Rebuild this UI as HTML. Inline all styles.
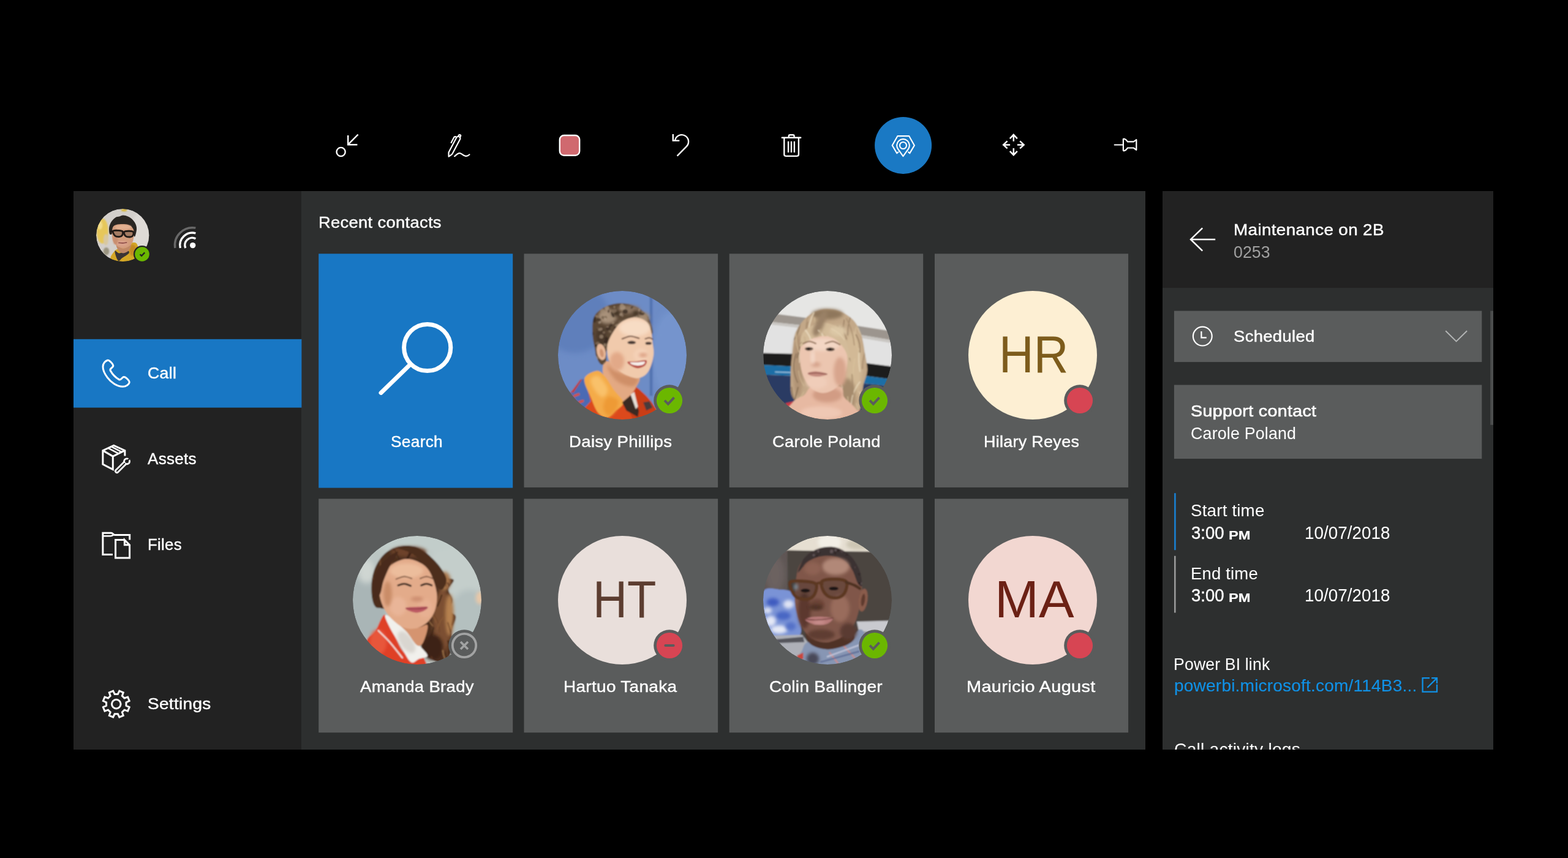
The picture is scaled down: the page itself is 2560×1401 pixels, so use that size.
<!DOCTYPE html>
<html lang="en">
<head>
<meta charset="utf-8">
<title>Remote Assist - Recent contacts</title>
<style>
*{box-sizing:border-box;margin:0;padding:0}
html,body{width:2560px;height:1401px;background:#000;overflow:hidden}
body{position:relative;font-family:"Liberation Sans",sans-serif;color:#fff}
.abs{position:absolute}
svg{position:absolute;display:block}
.x{position:absolute;white-space:nowrap;line-height:1;transform-origin:0 50%}
#side{left:120px;top:312px;width:372px;height:912px;background:#222}
#main{left:492px;top:312px;width:1378px;height:912px;background:#2d2f2f}
#right{left:1898px;top:312px;width:540px;height:912px;background:#2d2f2f}
#rhead{left:1898px;top:312px;width:540px;height:158px;background:#222}
#clip{left:1898px;top:1190px;width:540px;height:34px;overflow:hidden}
#logs{margin-left:-1898px;margin-top:-1190px}
.av{position:absolute;width:210px;height:210px;border-radius:50%;overflow:hidden}
.av.me{width:86.4px;height:86.4px}
.av svg{left:0;top:0}
.bdg{overflow:visible}

</style>
</head>
<body>
<div id="side" class="abs"></div>
<div id="main" class="abs"></div>
<div id="right" class="abs"></div>
<div id="rhead" class="abs"></div>
<svg id="bg" width="2560" height="1401" viewBox="0 0 2560 1401" style="left:0;top:0"><rect x="120" y="553.8" width="372.4" height="111.8" fill="#1877c4"/><rect x="520.2" y="414.3" width="317.00" height="382.30" fill="#1877c4"/><rect x="855.5" y="414.3" width="316.60" height="381.60" fill="#5a5c5c"/><rect x="1190.7" y="414.3" width="316.50" height="381.60" fill="#5a5c5c"/><rect x="1526.0" y="414.3" width="316.10" height="381.60" fill="#5a5c5c"/><rect x="520.2" y="814.4" width="317.00" height="381.80" fill="#5a5c5c"/><rect x="855.5" y="814.4" width="316.60" height="381.80" fill="#5a5c5c"/><rect x="1190.7" y="814.4" width="316.50" height="381.80" fill="#5a5c5c"/><rect x="1526.0" y="814.4" width="316.10" height="381.80" fill="#5a5c5c"/><rect x="1916.9" y="507.6" width="502.4" height="83.5" fill="#5a5c5c"/><rect x="1916.9" y="628.5" width="502.4" height="120.6" fill="#5a5c5c"/><rect x="1917" y="805.2" width="2.8" height="93" fill="#1a7bc8"/><rect x="1917" y="907.7" width="2.6" height="92.8" fill="#9a9a9a"/><rect x="2433.2" y="507.6" width="4.8" height="186.2" fill="#4c4e4e"/></svg>

<div class="av me" style="left:157.3px;top:341.1px"><svg class="ph" width="86.4" height="86.4" viewBox="0 0 210 210"><defs><clipPath id="cu"><circle cx="105" cy="105" r="105"/></clipPath><filter id="bu" x="-10%" y="-10%" width="120%" height="120%"><feGaussianBlur stdDeviation="1.6"/></filter><filter id="su" x="-30%" y="-30%" width="160%" height="160%"><feGaussianBlur stdDeviation="5"/></filter><filter id="mu" x="-30%" y="-30%" width="160%" height="160%"><feGaussianBlur stdDeviation="2.4"/></filter></defs><g clip-path="url(#cu)"><g filter="url(#bu)"><rect x="-5" y="-5" width="220" height="220" fill="#d3cfcb"/><ellipse cx="177.9" cy="88.0" rx="38.3" ry="76.5" fill="#dedad6" filter="url(#su)"/><ellipse cx="24.9" cy="88.0" rx="23.0" ry="49.7" fill="#e6c75a" filter="url(#mu)"/><ellipse cx="15.3" cy="65.0" rx="9.6" ry="17.2" fill="#f2dc8a" filter="url(#mu)"/><ellipse cx="38.3" cy="122.4" rx="9.6" ry="23.0" fill="#d8c8a0" filter="url(#mu)"/><ellipse cx="110.9" cy="4.8" rx="11.5" ry="5.7" fill="#d8b840" filter="url(#mu)"/><ellipse cx="40.2" cy="168.3" rx="11.5" ry="15.3" fill="#9a9480" filter="url(#mu)"/><path d="M57.4 198.9C54.2 190.0 66.9 175.3 72.7 168.3C78.4 161.3 79.7 162.6 91.8 156.8C103.9 151.1 133.2 135.8 145.4 133.9C157.5 132.0 161.9 137.1 164.5 145.4C167.0 153.6 164.5 172.1 160.7 183.6C156.8 195.1 153.0 207.8 141.5 214.2C130.1 220.6 105.8 224.4 91.8 221.9C77.8 219.3 60.6 207.8 57.4 198.9Z" fill="#d4a726" /><ellipse cx="145.4" cy="164.5" rx="13.4" ry="23.0" fill="#c48a20" filter="url(#mu)"/><path d="M74.6 166.4C76.5 163.5 83.8 176.3 91.8 176.0C99.8 175.6 116.0 164.5 122.4 164.5C128.8 164.5 133.2 170.9 130.1 176.0C126.9 181.1 110.0 190.0 103.3 195.1C96.6 200.2 93.7 206.9 89.9 206.6C86.1 206.2 82.9 199.9 80.3 193.2C77.8 186.5 72.7 169.3 74.6 166.4Z" fill="#3b3434" /><path d="M80.3 141.5C83.5 140.3 97.5 156.8 107.1 156.8C116.7 156.8 133.9 140.3 137.7 141.5C141.5 142.8 135.2 158.7 130.1 164.5C125.0 170.2 114.1 176.0 107.1 176.0C100.1 176.0 92.4 170.2 88.0 164.5C83.5 158.7 77.1 142.8 80.3 141.5Z" fill="#c08866" /><path d="M53.6 99.5C51.6 95.0 50.4 81.0 51.6 72.7C52.9 64.4 57.1 56.1 61.2 49.7C65.3 43.4 71.4 37.6 76.5 34.4C81.6 31.2 86.7 32.0 91.8 30.6C96.9 29.2 101.4 25.8 107.1 25.8C112.8 25.8 120.5 28.2 126.2 30.6C132.0 33.0 136.7 35.7 141.5 40.2C146.3 44.6 151.7 50.7 154.9 57.4C158.1 64.1 161.0 71.4 160.7 80.3C160.3 89.3 155.6 109.7 153.0 110.9C150.5 112.2 147.9 95.0 145.4 88.0C142.8 81.0 143.4 73.0 137.7 68.9C132.0 64.7 120.5 63.4 110.9 63.1C101.4 62.8 87.7 64.1 80.3 66.9C73.0 69.8 69.8 74.9 66.9 80.3C64.1 85.7 65.3 96.3 63.1 99.5C60.9 102.6 55.5 103.9 53.6 99.5Z" fill="#2b2522" /><path d="M63.1 91.8C63.8 82.9 64.1 74.0 68.9 68.9C73.6 63.8 82.2 62.2 91.8 61.2C101.4 60.2 117.0 59.9 126.2 63.1C135.5 66.3 143.4 72.4 147.3 80.3C151.1 88.3 150.1 101.4 149.2 110.9C148.2 120.5 146.0 130.7 141.5 137.7C137.1 144.7 128.8 149.8 122.4 153.0C116.0 156.2 110.3 158.1 103.3 156.8C96.3 155.6 86.7 151.1 80.3 145.4C74.0 139.6 67.9 131.3 65.0 122.4C62.2 113.5 62.5 100.7 63.1 91.8Z" fill="#d39c7c" /><ellipse cx="107.1" cy="72.7" rx="32.5" ry="9.6" fill="#e2b090" filter="url(#mu)"/><ellipse cx="103.3" cy="137.7" rx="23.0" ry="11.5" fill="#d9a08a" filter="url(#mu)"/><ellipse cx="76.5" cy="122.4" rx="9.6" ry="19.1" fill="#c98e70" filter="url(#mu)"/><path d="M66.9 88.0C69.2 84.5 81.6 85.7 88.0 86.1C94.4 86.4 102.6 86.7 105.2 89.9C107.7 93.1 105.5 101.7 103.3 105.2C101.0 108.7 96.6 110.6 91.8 110.9C87.0 111.2 78.7 110.9 74.6 107.1C70.4 103.3 64.7 91.5 66.9 88.0Z" fill="#6a5448" fill-opacity=".45" stroke="#231a18" stroke-width="7"/><path d="M110.9 91.8C113.2 88.5 124.0 88.0 130.1 88.0C136.1 88.0 144.7 88.6 147.3 91.8C149.8 95.0 147.6 103.8 145.4 107.1C143.1 110.5 138.7 111.7 133.9 111.9C129.1 112.0 120.5 111.4 116.7 108.1C112.8 104.7 108.7 95.2 110.9 91.8Z" fill="#6a5448" fill-opacity=".45" stroke="#231a18" stroke-width="7"/><path d="M105.2 92.8C106.1 92.9 110.0 93.6 110.9 93.7" fill="none" stroke="#231a18" stroke-width="6" stroke-linecap="round"/><path d="M65.0 88.0C63.4 88.6 57.1 91.2 55.5 91.8" fill="none" stroke="#231a18" stroke-width="5" stroke-linecap="round"/><path d="M89.9 134.8C92.4 135.0 100.1 136.0 105.2 135.8C110.3 135.6 117.9 134.2 120.5 133.9" fill="none" stroke="#8a4a44" stroke-width="4" stroke-linecap="round"/></g></g></svg></div>
<svg class="bdg" width="32" height="32" viewBox="-16 -16 32 32" style="left:215.5px;top:399.4px"><circle r="14" fill="#222"/><circle r="11.8" fill="#6bb700"/><path d="M-3.4 0.3L-0.9 2.9L4.3 -2.6" fill="none" stroke="#222" stroke-width="2.3"/></svg>

<div class="x" style="left:240.86px;top:596.29px;font-size:26.4px;color:#fff;-webkit-text-stroke:0.4px #fff;letter-spacing:0.300px;transform:scaleX(1.0106);">Call</div>
<div class="x" style="left:241.39px;top:736.29px;font-size:26.4px;color:#fff;-webkit-text-stroke:0.4px #fff;letter-spacing:0.300px;transform:scaleX(0.9868);">Assets</div>
<div class="x" style="left:240.93px;top:876.09px;font-size:26.4px;color:#fff;-webkit-text-stroke:0.4px #fff;letter-spacing:0.300px;transform:scaleX(0.9762);">Files</div>
<div class="x" style="left:240.74px;top:1136.29px;font-size:26.4px;color:#fff;-webkit-text-stroke:0.4px #fff;letter-spacing:0.300px;transform:scaleX(1.0604);">Settings</div>
<div class="x" style="left:519.68px;top:349.79px;font-size:26.4px;color:#fff;-webkit-text-stroke:0.4px #fff;letter-spacing:0.300px;transform:scaleX(1.0364);">Recent contacts</div>
<div class="x" style="left:638.41px;top:708.49px;font-size:26.4px;color:#fff;-webkit-text-stroke:0.4px #fff;letter-spacing:0.300px;transform:scaleX(0.9953);">Search</div>
<div class="av" style="left:911px;top:475px"><svg class="ph" width="210" height="210" viewBox="0 0 210 210"><defs><clipPath id="cd"><circle cx="105" cy="105" r="105"/></clipPath><filter id="bd" x="-10%" y="-10%" width="120%" height="120%"><feGaussianBlur stdDeviation="1.1"/></filter><filter id="sd" x="-30%" y="-30%" width="160%" height="160%"><feGaussianBlur stdDeviation="5"/></filter><filter id="md" x="-30%" y="-30%" width="160%" height="160%"><feGaussianBlur stdDeviation="2.4"/></filter></defs><g clip-path="url(#cd)"><g filter="url(#bd)"><rect x="-5" y="-5" width="220" height="220" fill="#6d8cc6"/><ellipse cx="27.8" cy="44.9" rx="56.5" ry="56.5" fill="#5f7fbb" filter="url(#sd)"/><ellipse cx="187.1" cy="104.8" rx="34.3" ry="71.9" fill="#7494cd" filter="url(#sd)"/><rect x="149.7" y="0.0" width="4.5" height="171.3" fill="#5373b0" /><rect x="154.2" y="0.0" width="1.7" height="171.3" fill="#6686c2" /><path d="M19.2 166.5L43.2 143.4L65.4 130.5L94.6 156.2L122.0 153.7L144.2 171.6L163.1 195.6L163.1 212.8L15.8 212.8Z" fill="#dc4a1d" /><path d="M122.0 156.2C126.0 153.7 133.1 160.8 139.1 166.5C145.1 172.2 155.1 182.8 157.9 190.5C160.8 198.2 161.7 209.1 156.2 212.8C150.8 216.5 132.2 217.9 125.4 212.8C118.5 207.6 115.7 191.3 115.1 181.9C114.5 172.5 118.0 158.8 122.0 156.2Z" fill="#c93c16" /><path d="M20.0 167.4L36.3 145.1L44.0 143.4L53.4 180.2L41.5 193.1Z" fill="#4c6bb4" /><path d="M25.2 169.9L34.6 166.5L35.6 169.9L26.0 173.4Z" fill="#d8503a" /><path d="M32.9 180.2L41.5 177.6L42.3 181.1L34.3 184.0Z" fill="#d8503a" /><path d="M21.8 164.8L36.3 145.1L39.4 144.2L25.2 166.5Z" fill="#c33a2a" /><path d="M77.4 115.1C82.6 112.8 95.7 121.4 104.8 125.4C114.0 129.4 128.5 133.7 132.2 139.1C136.0 144.5 130.0 152.2 127.1 157.9C124.3 163.7 119.1 169.1 115.1 173.4C111.1 177.6 107.7 185.9 103.1 183.6C98.6 181.4 92.6 167.1 87.7 159.7C82.9 152.2 75.7 146.5 74.0 139.1C72.3 131.7 72.3 117.4 77.4 115.1Z" fill="#e3a983" /><path d="M80.9 122.0C82.6 120.3 96.6 132.4 104.8 135.7C113.1 139.0 127.7 138.2 130.5 141.7C133.4 145.1 128.0 155.5 122.0 156.2C116.0 156.9 101.4 151.7 94.6 146.0C87.7 140.2 79.1 123.7 80.9 122.0Z" fill="#cf8f68" filter="url(#md)"/><path d="M43.2 143.4C44.9 136.2 58.0 131.0 63.7 130.5C69.4 130.1 72.9 135.7 77.4 140.8C82.0 146.0 86.3 154.5 91.1 161.4C96.0 168.2 106.0 176.2 106.6 181.9C107.1 187.6 98.8 191.5 94.6 195.6C90.3 199.8 85.7 206.2 80.9 206.8C76.0 207.3 70.0 204.6 65.4 199.1C60.9 193.5 57.2 182.6 53.4 173.4C49.7 164.1 41.5 150.5 43.2 143.4Z" fill="#f4ab49" /><path d="M53.4 146.0C54.0 141.7 60.9 136.8 65.4 139.1C70.0 141.4 79.4 153.9 80.9 159.7C82.3 165.4 77.1 172.5 74.0 173.4C70.9 174.2 65.4 169.4 62.0 164.8C58.6 160.2 52.9 150.2 53.4 146.0Z" fill="#f9c16a" filter="url(#md)"/><path d="M80.9 173.4C84.9 171.4 95.7 175.1 98.0 178.5C100.3 181.9 97.1 189.6 94.6 193.9C92.0 198.2 86.0 204.8 82.6 204.2C79.1 203.6 74.3 195.6 74.0 190.5C73.7 185.4 76.9 175.4 80.9 173.4Z" fill="#ee9a35" filter="url(#md)"/><path d="M104.8 181.9L120.3 169.1L132.2 195.6L130.5 205.9L111.7 195.6Z" fill="#3b2a22" /><path d="M118.5 169.1L124.5 164.8L130.5 188.8L127.1 193.1Z" fill="#e6dfd6" /><path d="M139.1 181.9L149.4 180.2L154.5 190.5L144.2 195.6Z" fill="#4a3a3a" /><path d="M60.3 94.6C59.2 88.3 56.8 79.1 56.5 70.6C56.2 62.0 55.7 50.3 58.6 43.2C61.5 36.0 67.7 31.5 74.0 27.8C80.3 24.0 88.3 21.3 96.3 20.6C104.3 19.8 114.3 20.8 122.0 23.5C129.7 26.1 137.5 31.3 142.5 36.3C147.5 41.3 150.1 47.7 151.9 53.4C153.8 59.2 155.8 67.2 153.7 70.6C151.5 74.0 147.2 72.3 139.1 74.0C131.0 75.7 114.5 77.4 104.8 80.9C95.1 84.3 85.3 88.9 80.9 94.6C76.4 100.3 80.0 110.8 78.3 115.1C76.6 119.4 73.1 121.4 70.6 120.3C68.0 119.1 64.6 112.5 62.9 108.3C61.2 104.0 61.4 100.8 60.3 94.6Z" fill="#5b4735" /><ellipse cx="80.9" cy="41.5" rx="15.4" ry="12.0" fill="#a8917a" filter="url(#md)"/><ellipse cx="115.1" cy="30.3" rx="18.8" ry="6.9" fill="#8c7560" filter="url(#md)"/><ellipse cx="139.1" cy="43.2" rx="10.3" ry="8.6" fill="#a08870" filter="url(#md)"/><ellipse cx="70.6" cy="74.0" rx="8.6" ry="15.4" fill="#4a382a" filter="url(#md)"/><ellipse cx="94.6" cy="36.3" rx="6.9" ry="5.1" fill="#3f3024" filter="url(#md)"/><ellipse cx="127.1" cy="36.3" rx="5.1" ry="4.1" fill="#3f3024" filter="url(#md)"/><clipPath id="hd"><path d="M60.3 94.6C59.2 88.3 56.8 79.1 56.5 70.6C56.2 62.0 55.7 50.3 58.6 43.2C61.5 36.0 67.7 31.5 74.0 27.8C80.3 24.0 88.3 21.3 96.3 20.6C104.3 19.8 114.3 20.8 122.0 23.5C129.7 26.1 137.5 31.3 142.5 36.3C147.5 41.3 150.1 47.7 151.9 53.4C153.8 59.2 155.8 67.2 153.7 70.6C151.5 74.0 147.2 72.3 139.1 74.0C131.0 75.7 114.5 77.4 104.8 80.9C95.1 84.3 85.3 88.9 80.9 94.6C76.4 100.3 80.0 110.8 78.3 115.1C76.6 119.4 73.1 121.4 70.6 120.3C68.0 119.1 64.6 112.5 62.9 108.3C61.2 104.0 61.4 100.8 60.3 94.6Z"/></clipPath><g clip-path="url(#hd)" opacity="0.7"><ellipse cx="88.0" cy="35.6" rx="2.2" ry="1.7" fill="#3a2c22" transform="rotate(117 88.0 35.6)"/><ellipse cx="92.1" cy="26.3" rx="2.1" ry="1.5" fill="#a08a74" transform="rotate(91 92.1 26.3)"/><ellipse cx="63.3" cy="29.6" rx="3.8" ry="2.1" fill="#6e5a47" transform="rotate(76 63.3 29.6)"/><ellipse cx="78.2" cy="83.1" rx="3.3" ry="2.3" fill="#2f241c" transform="rotate(171 78.2 83.1)"/><ellipse cx="151.4" cy="25.2" rx="2.6" ry="1.5" fill="#8a7560" transform="rotate(155 151.4 25.2)"/><ellipse cx="68.0" cy="51.3" rx="2.4" ry="1.9" fill="#b09a84" transform="rotate(147 68.0 51.3)"/><ellipse cx="118.6" cy="57.7" rx="2.1" ry="1.1" fill="#3a2c22" transform="rotate(99 118.6 57.7)"/><ellipse cx="76.5" cy="88.4" rx="2.7" ry="2.1" fill="#a08a74" transform="rotate(77 76.5 88.4)"/><ellipse cx="100.5" cy="50.4" rx="3.5" ry="2.2" fill="#6e5a47" transform="rotate(143 100.5 50.4)"/><ellipse cx="112.3" cy="72.9" rx="3.6" ry="2.3" fill="#2f241c" transform="rotate(158 112.3 72.9)"/><ellipse cx="151.7" cy="32.3" rx="3.7" ry="2.1" fill="#8a7560" transform="rotate(75 151.7 32.3)"/><ellipse cx="104.0" cy="24.5" rx="3.7" ry="2.9" fill="#b09a84" transform="rotate(120 104.0 24.5)"/><ellipse cx="141.6" cy="51.8" rx="3.3" ry="2.6" fill="#3a2c22" transform="rotate(125 141.6 51.8)"/><ellipse cx="100.8" cy="104.3" rx="3.0" ry="2.5" fill="#a08a74" transform="rotate(170 100.8 104.3)"/><ellipse cx="62.4" cy="90.5" rx="4.2" ry="3.8" fill="#6e5a47" transform="rotate(116 62.4 90.5)"/><ellipse cx="84.2" cy="59.0" rx="2.0" ry="1.5" fill="#2f241c" transform="rotate(120 84.2 59.0)"/><ellipse cx="72.9" cy="32.2" rx="3.7" ry="2.1" fill="#8a7560" transform="rotate(11 72.9 32.2)"/><ellipse cx="80.6" cy="59.5" rx="2.2" ry="1.6" fill="#b09a84" transform="rotate(157 80.6 59.5)"/><ellipse cx="109.9" cy="108.6" rx="3.9" ry="2.5" fill="#3a2c22" transform="rotate(147 109.9 108.6)"/><ellipse cx="96.9" cy="56.3" rx="4.1" ry="2.4" fill="#a08a74" transform="rotate(159 96.9 56.3)"/><ellipse cx="73.6" cy="43.7" rx="3.1" ry="2.4" fill="#6e5a47" transform="rotate(42 73.6 43.7)"/><ellipse cx="82.1" cy="21.0" rx="2.8" ry="2.2" fill="#2f241c" transform="rotate(75 82.1 21.0)"/><ellipse cx="149.1" cy="89.4" rx="3.4" ry="2.8" fill="#8a7560" transform="rotate(93 149.1 89.4)"/><ellipse cx="61.8" cy="110.2" rx="3.9" ry="3.5" fill="#b09a84" transform="rotate(140 61.8 110.2)"/><ellipse cx="94.6" cy="60.3" rx="3.4" ry="1.8" fill="#3a2c22" transform="rotate(19 94.6 60.3)"/><ellipse cx="63.1" cy="41.4" rx="2.7" ry="1.4" fill="#a08a74" transform="rotate(29 63.1 41.4)"/><ellipse cx="56.6" cy="35.6" rx="2.8" ry="1.4" fill="#6e5a47" transform="rotate(18 56.6 35.6)"/><ellipse cx="141.5" cy="81.8" rx="2.6" ry="1.7" fill="#2f241c" transform="rotate(27 141.5 81.8)"/><ellipse cx="91.9" cy="32.8" rx="4.2" ry="3.1" fill="#8a7560" transform="rotate(153 91.9 32.8)"/><ellipse cx="103.5" cy="29.1" rx="2.8" ry="1.7" fill="#b09a84" transform="rotate(18 103.5 29.1)"/><ellipse cx="137.0" cy="36.7" rx="4.1" ry="3.1" fill="#3a2c22" transform="rotate(4 137.0 36.7)"/><ellipse cx="70.8" cy="74.7" rx="3.2" ry="3.1" fill="#a08a74" transform="rotate(5 70.8 74.7)"/><ellipse cx="140.4" cy="90.0" rx="2.8" ry="1.6" fill="#6e5a47" transform="rotate(47 140.4 90.0)"/><ellipse cx="131.5" cy="73.7" rx="2.7" ry="1.7" fill="#2f241c" transform="rotate(140 131.5 73.7)"/><ellipse cx="135.4" cy="118.8" rx="3.8" ry="3.4" fill="#8a7560" transform="rotate(153 135.4 118.8)"/><ellipse cx="128.4" cy="43.2" rx="2.8" ry="1.4" fill="#b09a84" transform="rotate(93 128.4 43.2)"/><ellipse cx="59.2" cy="48.4" rx="3.5" ry="3.4" fill="#3a2c22" transform="rotate(47 59.2 48.4)"/><ellipse cx="100.0" cy="114.0" rx="4.1" ry="2.8" fill="#a08a74" transform="rotate(178 100.0 114.0)"/><ellipse cx="77.9" cy="43.2" rx="2.4" ry="2.0" fill="#6e5a47" transform="rotate(35 77.9 43.2)"/><ellipse cx="144.0" cy="104.3" rx="3.4" ry="3.1" fill="#2f241c" transform="rotate(86 144.0 104.3)"/><ellipse cx="64.8" cy="86.4" rx="3.7" ry="3.3" fill="#8a7560" transform="rotate(164 64.8 86.4)"/><ellipse cx="103.0" cy="38.4" rx="2.7" ry="2.5" fill="#b09a84" transform="rotate(142 103.0 38.4)"/><ellipse cx="150.9" cy="60.0" rx="4.1" ry="3.5" fill="#3a2c22" transform="rotate(72 150.9 60.0)"/><ellipse cx="73.0" cy="33.2" rx="4.0" ry="3.6" fill="#a08a74" transform="rotate(27 73.0 33.2)"/><ellipse cx="70.7" cy="103.0" rx="3.4" ry="2.3" fill="#6e5a47" transform="rotate(176 70.7 103.0)"/><ellipse cx="109.8" cy="33.6" rx="4.1" ry="3.4" fill="#2f241c" transform="rotate(3 109.8 33.6)"/><ellipse cx="107.7" cy="113.6" rx="3.9" ry="3.6" fill="#8a7560" transform="rotate(78 107.7 113.6)"/><ellipse cx="77.0" cy="45.7" rx="2.5" ry="2.0" fill="#b09a84" transform="rotate(53 77.0 45.7)"/><ellipse cx="81.7" cy="62.3" rx="4.0" ry="2.7" fill="#3a2c22" transform="rotate(24 81.7 62.3)"/><ellipse cx="101.0" cy="78.7" rx="2.9" ry="2.8" fill="#a08a74" transform="rotate(163 101.0 78.7)"/><ellipse cx="105.3" cy="73.6" rx="2.0" ry="1.5" fill="#6e5a47" transform="rotate(94 105.3 73.6)"/><ellipse cx="74.3" cy="20.9" rx="2.4" ry="1.8" fill="#2f241c" transform="rotate(144 74.3 20.9)"/><ellipse cx="127.0" cy="76.0" rx="3.1" ry="2.4" fill="#8a7560" transform="rotate(59 127.0 76.0)"/><ellipse cx="132.7" cy="31.1" rx="2.5" ry="1.6" fill="#b09a84" transform="rotate(101 132.7 31.1)"/><ellipse cx="131.5" cy="71.2" rx="3.7" ry="3.5" fill="#3a2c22" transform="rotate(101 131.5 71.2)"/><ellipse cx="99.6" cy="81.6" rx="3.1" ry="2.6" fill="#a08a74" transform="rotate(91 99.6 81.6)"/><ellipse cx="100.5" cy="73.7" rx="4.1" ry="3.5" fill="#6e5a47" transform="rotate(86 100.5 73.7)"/><ellipse cx="141.7" cy="114.5" rx="3.2" ry="3.1" fill="#2f241c" transform="rotate(47 141.7 114.5)"/><ellipse cx="138.1" cy="34.2" rx="3.0" ry="1.6" fill="#8a7560" transform="rotate(22 138.1 34.2)"/><ellipse cx="79.9" cy="27.8" rx="3.7" ry="3.5" fill="#b09a84" transform="rotate(121 79.9 27.8)"/><ellipse cx="71.5" cy="92.0" rx="2.3" ry="2.2" fill="#3a2c22" transform="rotate(119 71.5 92.0)"/><ellipse cx="150.5" cy="42.4" rx="2.9" ry="2.1" fill="#a08a74" transform="rotate(171 150.5 42.4)"/><ellipse cx="152.7" cy="103.6" rx="2.9" ry="2.2" fill="#6e5a47" transform="rotate(29 152.7 103.6)"/><ellipse cx="89.5" cy="40.1" rx="3.6" ry="1.8" fill="#2f241c" transform="rotate(57 89.5 40.1)"/><ellipse cx="110.3" cy="64.5" rx="2.7" ry="2.2" fill="#8a7560" transform="rotate(3 110.3 64.5)"/><ellipse cx="106.3" cy="27.0" rx="3.7" ry="3.7" fill="#b09a84" transform="rotate(177 106.3 27.0)"/><ellipse cx="66.7" cy="47.0" rx="3.7" ry="2.4" fill="#3a2c22" transform="rotate(7 66.7 47.0)"/><ellipse cx="69.1" cy="62.7" rx="3.8" ry="2.4" fill="#a08a74" transform="rotate(164 69.1 62.7)"/><ellipse cx="71.0" cy="112.2" rx="3.5" ry="1.9" fill="#6e5a47" transform="rotate(103 71.0 112.2)"/><ellipse cx="62.1" cy="89.2" rx="2.2" ry="2.1" fill="#2f241c" transform="rotate(77 62.1 89.2)"/><ellipse cx="118.2" cy="100.5" rx="3.9" ry="2.1" fill="#8a7560" transform="rotate(15 118.2 100.5)"/><ellipse cx="140.3" cy="65.8" rx="3.2" ry="3.1" fill="#b09a84" transform="rotate(61 140.3 65.8)"/><ellipse cx="82.5" cy="33.4" rx="2.5" ry="1.4" fill="#3a2c22" transform="rotate(95 82.5 33.4)"/><ellipse cx="72.2" cy="25.6" rx="2.7" ry="1.8" fill="#a08a74" transform="rotate(36 72.2 25.6)"/><ellipse cx="130.3" cy="49.5" rx="2.4" ry="1.6" fill="#6e5a47" transform="rotate(90 130.3 49.5)"/><ellipse cx="58.3" cy="45.5" rx="3.6" ry="2.8" fill="#2f241c" transform="rotate(3 58.3 45.5)"/><ellipse cx="74.9" cy="67.9" rx="2.2" ry="2.0" fill="#8a7560" transform="rotate(168 74.9 67.9)"/><ellipse cx="98.5" cy="69.9" rx="2.9" ry="2.2" fill="#b09a84" transform="rotate(150 98.5 69.9)"/><ellipse cx="123.3" cy="118.5" rx="3.8" ry="3.3" fill="#3a2c22" transform="rotate(62 123.3 118.5)"/><ellipse cx="118.3" cy="60.9" rx="2.1" ry="1.2" fill="#a08a74" transform="rotate(63 118.3 60.9)"/><ellipse cx="63.4" cy="94.4" rx="2.4" ry="1.3" fill="#6e5a47" transform="rotate(46 63.4 94.4)"/><ellipse cx="138.2" cy="107.3" rx="2.6" ry="1.6" fill="#2f241c" transform="rotate(121 138.2 107.3)"/><ellipse cx="85.0" cy="66.4" rx="3.0" ry="1.9" fill="#8a7560" transform="rotate(28 85.0 66.4)"/><ellipse cx="149.9" cy="117.5" rx="2.5" ry="2.5" fill="#b09a84" transform="rotate(98 149.9 117.5)"/><ellipse cx="86.6" cy="56.1" rx="2.8" ry="2.1" fill="#3a2c22" transform="rotate(0 86.6 56.1)"/><ellipse cx="105.4" cy="40.6" rx="2.0" ry="1.3" fill="#a08a74" transform="rotate(91 105.4 40.6)"/><ellipse cx="65.2" cy="60.4" rx="2.0" ry="1.3" fill="#6e5a47" transform="rotate(8 65.2 60.4)"/><ellipse cx="79.1" cy="78.9" rx="3.7" ry="3.0" fill="#2f241c" transform="rotate(95 79.1 78.9)"/><ellipse cx="126.1" cy="108.2" rx="2.7" ry="2.7" fill="#8a7560" transform="rotate(70 126.1 108.2)"/><ellipse cx="71.0" cy="92.8" rx="2.1" ry="1.9" fill="#b09a84" transform="rotate(116 71.0 92.8)"/><ellipse cx="143.2" cy="83.1" rx="3.8" ry="2.2" fill="#3a2c22" transform="rotate(132 143.2 83.1)"/><ellipse cx="107.4" cy="70.8" rx="3.8" ry="3.4" fill="#a08a74" transform="rotate(150 107.4 70.8)"/><ellipse cx="113.3" cy="109.6" rx="3.5" ry="2.2" fill="#6e5a47" transform="rotate(123 113.3 109.6)"/><ellipse cx="59.6" cy="33.8" rx="2.2" ry="2.0" fill="#2f241c" transform="rotate(65 59.6 33.8)"/><ellipse cx="110.8" cy="83.1" rx="3.5" ry="2.6" fill="#8a7560" transform="rotate(113 110.8 83.1)"/><ellipse cx="56.9" cy="100.1" rx="3.1" ry="2.4" fill="#b09a84" transform="rotate(135 56.9 100.1)"/><ellipse cx="120.6" cy="27.1" rx="2.6" ry="1.4" fill="#3a2c22" transform="rotate(133 120.6 27.1)"/><ellipse cx="82.3" cy="93.3" rx="3.6" ry="3.6" fill="#a08a74" transform="rotate(37 82.3 93.3)"/><ellipse cx="104.5" cy="58.7" rx="3.5" ry="3.1" fill="#6e5a47" transform="rotate(86 104.5 58.7)"/><ellipse cx="116.5" cy="84.6" rx="2.3" ry="1.5" fill="#2f241c" transform="rotate(14 116.5 84.6)"/><ellipse cx="128.7" cy="50.9" rx="2.0" ry="1.1" fill="#8a7560" transform="rotate(102 128.7 50.9)"/><ellipse cx="82.6" cy="87.6" rx="3.5" ry="2.3" fill="#b09a84" transform="rotate(125 82.6 87.6)"/><ellipse cx="106.7" cy="66.9" rx="2.3" ry="2.1" fill="#3a2c22" transform="rotate(84 106.7 66.9)"/><ellipse cx="75.9" cy="118.1" rx="2.0" ry="1.5" fill="#a08a74" transform="rotate(169 75.9 118.1)"/><ellipse cx="136.2" cy="117.1" rx="2.6" ry="1.6" fill="#6e5a47" transform="rotate(81 136.2 117.1)"/><ellipse cx="148.4" cy="41.6" rx="2.3" ry="1.8" fill="#2f241c" transform="rotate(105 148.4 41.6)"/><ellipse cx="149.1" cy="33.8" rx="3.1" ry="2.9" fill="#8a7560" transform="rotate(148 149.1 33.8)"/><ellipse cx="124.8" cy="43.6" rx="3.1" ry="1.6" fill="#b09a84" transform="rotate(162 124.8 43.6)"/><ellipse cx="56.9" cy="69.6" rx="2.7" ry="1.5" fill="#3a2c22" transform="rotate(81 56.9 69.6)"/><ellipse cx="89.9" cy="52.1" rx="2.0" ry="1.8" fill="#a08a74" transform="rotate(151 89.9 52.1)"/></g><path d="M91.1 65.4C95.1 59.2 99.1 53.7 104.8 50.0C110.5 46.3 118.8 43.2 125.4 43.2C132.0 43.2 139.8 46.3 144.2 50.0C148.7 53.7 150.2 59.7 151.9 65.4C153.7 71.1 153.8 78.0 154.5 84.3C155.2 90.6 156.7 96.8 156.2 103.1C155.8 109.4 153.9 116.5 151.9 122.0C150.0 127.4 147.8 132.2 144.2 135.7C140.7 139.1 135.4 142.0 130.5 142.5C125.7 143.1 121.1 141.7 115.1 139.1C109.1 136.5 100.0 131.7 94.6 127.1C89.1 122.5 84.9 118.3 82.6 111.7C80.3 105.1 79.4 95.4 80.9 87.7C82.3 80.0 87.1 71.7 91.1 65.4Z" fill="#f1caac" /><ellipse cx="125.4" cy="60.3" rx="25.7" ry="13.7" fill="#f7dcc4" filter="url(#md)"/><ellipse cx="96.3" cy="115.1" rx="12.0" ry="15.4" fill="#e2a988" filter="url(#md)"/><ellipse cx="135.7" cy="104.8" rx="12.0" ry="10.3" fill="#f5d2b8" filter="url(#md)"/><ellipse cx="70.6" cy="99.7" rx="7.2" ry="13.4" fill="#e9b898" transform="rotate(-12 70.6 99.7)" /><ellipse cx="71.4" cy="101.4" rx="3.1" ry="6.9" fill="#cf9472" transform="rotate(-12 71.4 101.4)" /><path d="M104.8 78.3C107.1 77.6 114.0 74.1 118.5 74.0C123.1 73.9 130.0 76.9 132.2 77.4" fill="none" stroke="#6a4a38" stroke-width="2.2" stroke-linecap="round" /><path d="M142.5 78.3C143.7 78.0 147.4 76.4 149.4 76.6C151.4 76.7 153.7 78.7 154.5 79.1" fill="none" stroke="#6a4a38" stroke-width="2" stroke-linecap="round" /><ellipse cx="120.3" cy="84.3" rx="6.9" ry="2.7" fill="#4a3a36" /><ellipse cx="147.7" cy="85.7" rx="5.1" ry="2.4" fill="#4a3a36" /><ellipse cx="139.1" cy="104.8" rx="6.9" ry="3.1" fill="#d99a7c" filter="url(#md)"/><path d="M113.4 116.0C114.8 114.7 123.7 115.5 128.8 115.1C134.0 114.7 142.1 112.3 144.2 113.4C146.4 114.5 144.0 119.8 141.7 122.0C139.4 124.1 134.1 126.1 130.5 126.3C127.0 126.4 123.1 124.5 120.3 122.8C117.4 121.1 112.0 117.3 113.4 116.0Z" fill="#b7463f" /><path d="M117.7 116.8C119.1 116.1 126.5 116.7 130.5 116.5C134.5 116.3 140.2 114.8 141.7 115.5C143.1 116.1 141.0 119.2 139.1 120.3C137.2 121.3 133.4 121.9 130.5 122.0C127.7 122.0 124.1 121.5 122.0 120.6C119.8 119.7 116.3 117.5 117.7 116.8Z" fill="#f7f2ee" /></g></g></svg></div>
<svg class="bdg" width="56" height="56" viewBox="-28 -28 56 56" style="left:1065.2px;top:626.0px"><circle r="25.8" fill="#5a5c5c"/><circle r="21.1" fill="#6bb700"/><path d="M-7.9 -0.2L-2.2 5.6L7.6 -4.9" fill="none" stroke="#5a5c5c" stroke-width="3.9"/></svg>
<div class="x" style="left:929.32px;top:708.49px;font-size:26.4px;color:#fff;-webkit-text-stroke:0.4px #fff;letter-spacing:0.300px;transform:scaleX(1.0449);">Daisy Phillips</div>
<div class="av" style="left:1246px;top:475px"><svg class="ph" width="210" height="210" viewBox="0 0 210 210"><defs><clipPath id="cc"><circle cx="105" cy="105" r="105"/></clipPath><filter id="bc" x="-10%" y="-10%" width="120%" height="120%"><feGaussianBlur stdDeviation="1.1"/></filter><filter id="sc" x="-30%" y="-30%" width="160%" height="160%"><feGaussianBlur stdDeviation="5"/></filter><filter id="mc" x="-30%" y="-30%" width="160%" height="160%"><feGaussianBlur stdDeviation="2.4"/></filter></defs><g clip-path="url(#cc)"><g filter="url(#bc)"><rect x="-5" y="-5" width="220" height="220" fill="#e6e6e4"/><path d="M-1.4 34.6L70.6 44.0L212.8 66.3L212.8 80.9L70.6 56.9L-1.4 49.2Z" fill="#9c958e" /><path d="M-1.4 49.2L70.6 56.9L212.8 80.9L212.8 86.0L70.6 62.0L-1.4 53.4Z" fill="#c9c6c2" /><path d="M-1.4 53.4L70.6 62.0L212.8 86.0L212.8 127.1L-1.4 103.1Z" fill="#e2e2e2" /><path d="M-1.4 101.4L53.4 103.1L212.8 123.7L212.8 145.1L53.4 123.7L-1.4 121.1Z" fill="#1c1c1e" /><path d="M-1.4 121.1L53.4 123.7L212.8 145.1L212.8 156.2L53.4 139.1L-1.4 136.5Z" fill="#1d6ea6" /><path d="M-1.4 136.5L53.4 139.1L212.8 156.2L212.8 212.8L-1.4 212.8Z" fill="#2a3b63" /><path d="M19.2 131.4L50.0 132.6L50.0 134.3L19.2 133.3Z" fill="#9cc4e0" /><path d="M36.3 183.6L50.0 180.2L50.0 195.6L41.5 192.2Z" fill="#c83a44" /><path d="M149.4 193.1L157.9 191.3L157.9 200.8L147.7 202.5Z" fill="#c83a44" /><path d="M50.0 176.8C42.9 168.2 45.2 152.5 44.9 139.1C44.6 125.7 46.9 108.3 48.3 96.3C49.7 84.3 49.7 76.0 53.4 67.2C57.2 58.3 63.7 49.3 70.6 43.2C77.4 37.0 86.0 32.2 94.6 30.3C103.1 28.5 113.4 29.3 122.0 32.0C130.5 34.7 139.7 40.2 146.0 46.6C152.2 53.0 156.2 60.9 159.7 70.6C163.1 80.3 164.8 94.8 166.5 104.8C168.2 114.8 170.5 122.0 169.9 130.5C169.4 139.1 164.5 147.7 163.1 156.2C161.7 164.8 162.8 175.1 161.4 181.9C159.9 188.8 158.8 194.2 154.5 197.3C150.2 200.5 146.8 201.9 135.7 200.8C124.5 199.6 102.0 194.5 87.7 190.5C73.4 186.5 57.2 185.4 50.0 176.8Z" fill="#c3a888" /><ellipse cx="146.0" cy="122.0" rx="15.4" ry="56.5" fill="#d2b996" filter="url(#mc)"/><ellipse cx="56.9" cy="122.0" rx="8.6" ry="51.4" fill="#b09374" filter="url(#mc)"/><ellipse cx="104.8" cy="38.0" rx="25.7" ry="8.6" fill="#8f775c" filter="url(#mc)"/><ellipse cx="135.7" cy="169.9" rx="15.4" ry="27.4" fill="#a58a6c" filter="url(#mc)"/><clipPath id="hc"><path d="M50.0 176.8C42.9 168.2 45.2 152.5 44.9 139.1C44.6 125.7 46.9 108.3 48.3 96.3C49.7 84.3 49.7 76.0 53.4 67.2C57.2 58.3 63.7 49.3 70.6 43.2C77.4 37.0 86.0 32.2 94.6 30.3C103.1 28.5 113.4 29.3 122.0 32.0C130.5 34.7 139.7 40.2 146.0 46.6C152.2 53.0 156.2 60.9 159.7 70.6C163.1 80.3 164.8 94.8 166.5 104.8C168.2 114.8 170.5 122.0 169.9 130.5C169.4 139.1 164.5 147.7 163.1 156.2C161.7 164.8 162.8 175.1 161.4 181.9C159.9 188.8 158.8 194.2 154.5 197.3C150.2 200.5 146.8 201.9 135.7 200.8C124.5 199.6 102.0 194.5 87.7 190.5C73.4 186.5 57.2 185.4 50.0 176.8Z"/></clipPath><g clip-path="url(#hc)" opacity="0.7"><path d="M74.6 123.1Q74.0 142.7 78.2 161.8" fill="none" stroke="#e3d0b0" stroke-width="1.3" stroke-linecap="round"/><path d="M46.5 173.1Q41.9 188.3 51.3 201.2" fill="none" stroke="#8d7358" stroke-width="1.9" stroke-linecap="round"/><path d="M149.5 111.5Q146.5 124.4 146.9 137.6" fill="none" stroke="#d8c19c" stroke-width="2.4" stroke-linecap="round"/><path d="M110.3 156.7Q105.8 168.1 107.5 180.3" fill="none" stroke="#a18769" stroke-width="2.0" stroke-linecap="round"/><path d="M82.6 35.6Q74.4 51.7 73.7 69.7" fill="none" stroke="#efe0c4" stroke-width="2.4" stroke-linecap="round"/><path d="M134.2 187.3Q137.0 209.4 137.4 231.6" fill="none" stroke="#7c654d" stroke-width="2.5" stroke-linecap="round"/><path d="M154.8 46.9Q152.0 62.2 161.8 74.1" fill="none" stroke="#e3d0b0" stroke-width="1.8" stroke-linecap="round"/><path d="M123.2 81.6Q125.6 98.0 123.1 114.4" fill="none" stroke="#8d7358" stroke-width="2.0" stroke-linecap="round"/><path d="M117.9 184.4Q106.4 207.2 111.9 232.1" fill="none" stroke="#d8c19c" stroke-width="2.6" stroke-linecap="round"/><path d="M128.8 58.1Q113.1 79.4 116.6 105.6" fill="none" stroke="#a18769" stroke-width="2.0" stroke-linecap="round"/><path d="M134.1 66.3Q133.8 85.8 125.4 103.4" fill="none" stroke="#efe0c4" stroke-width="1.3" stroke-linecap="round"/><path d="M151.7 199.0Q159.9 219.8 164.3 241.6" fill="none" stroke="#7c654d" stroke-width="1.4" stroke-linecap="round"/><path d="M81.6 161.4Q77.4 172.2 75.7 183.8" fill="none" stroke="#e3d0b0" stroke-width="1.3" stroke-linecap="round"/><path d="M134.7 86.7Q128.1 110.6 121.7 134.5" fill="none" stroke="#8d7358" stroke-width="2.6" stroke-linecap="round"/><path d="M83.6 43.4Q86.3 55.1 82.0 66.3" fill="none" stroke="#d8c19c" stroke-width="1.8" stroke-linecap="round"/><path d="M121.2 56.9Q132.6 77.6 135.8 100.9" fill="none" stroke="#a18769" stroke-width="2.5" stroke-linecap="round"/><path d="M157.0 94.7Q154.9 113.1 158.0 131.3" fill="none" stroke="#efe0c4" stroke-width="2.0" stroke-linecap="round"/><path d="M114.8 136.0Q110.5 153.6 103.9 170.5" fill="none" stroke="#7c654d" stroke-width="2.2" stroke-linecap="round"/><path d="M74.6 81.6Q67.8 98.6 62.6 116.2" fill="none" stroke="#e3d0b0" stroke-width="1.2" stroke-linecap="round"/><path d="M96.8 129.2Q100.8 148.6 109.7 166.2" fill="none" stroke="#8d7358" stroke-width="1.3" stroke-linecap="round"/><path d="M123.3 109.8Q118.1 125.2 119.4 141.4" fill="none" stroke="#d8c19c" stroke-width="2.2" stroke-linecap="round"/><path d="M47.7 40.6Q50.7 65.7 41.7 89.2" fill="none" stroke="#a18769" stroke-width="1.8" stroke-linecap="round"/><path d="M119.0 84.9Q122.5 100.0 121.9 115.5" fill="none" stroke="#efe0c4" stroke-width="2.0" stroke-linecap="round"/><path d="M82.4 94.6Q79.5 105.6 78.1 117.0" fill="none" stroke="#7c654d" stroke-width="2.2" stroke-linecap="round"/><path d="M83.7 68.3Q85.0 83.2 77.6 96.3" fill="none" stroke="#e3d0b0" stroke-width="1.8" stroke-linecap="round"/><path d="M132.2 47.7Q128.9 63.9 136.1 78.8" fill="none" stroke="#8d7358" stroke-width="1.8" stroke-linecap="round"/><path d="M151.9 59.2Q146.5 80.0 156.4 99.1" fill="none" stroke="#d8c19c" stroke-width="1.8" stroke-linecap="round"/><path d="M73.0 50.9Q68.5 64.5 72.5 78.3" fill="none" stroke="#a18769" stroke-width="2.4" stroke-linecap="round"/><path d="M67.8 77.8Q57.6 96.0 59.3 116.9" fill="none" stroke="#efe0c4" stroke-width="1.7" stroke-linecap="round"/><path d="M61.1 80.1Q60.3 95.0 55.1 109.1" fill="none" stroke="#7c654d" stroke-width="1.8" stroke-linecap="round"/><path d="M97.4 100.1Q99.8 114.6 89.7 125.4" fill="none" stroke="#e3d0b0" stroke-width="2.5" stroke-linecap="round"/><path d="M154.9 198.5Q145.7 223.3 157.2 247.1" fill="none" stroke="#8d7358" stroke-width="1.5" stroke-linecap="round"/><path d="M138.1 172.9Q139.9 191.5 134.0 209.2" fill="none" stroke="#d8c19c" stroke-width="1.7" stroke-linecap="round"/><path d="M73.3 41.9Q67.7 56.6 71.5 71.9" fill="none" stroke="#a18769" stroke-width="1.3" stroke-linecap="round"/><path d="M157.9 148.6Q142.0 168.3 144.1 193.6" fill="none" stroke="#efe0c4" stroke-width="2.0" stroke-linecap="round"/><path d="M46.5 157.4Q47.6 172.7 53.4 187.0" fill="none" stroke="#7c654d" stroke-width="1.9" stroke-linecap="round"/><path d="M96.6 190.4Q99.3 206.4 94.2 221.8" fill="none" stroke="#e3d0b0" stroke-width="2.4" stroke-linecap="round"/><path d="M104.6 163.7Q105.5 177.4 107.4 191.0" fill="none" stroke="#8d7358" stroke-width="2.3" stroke-linecap="round"/><path d="M66.3 165.3Q52.9 184.5 53.4 207.9" fill="none" stroke="#d8c19c" stroke-width="1.2" stroke-linecap="round"/><path d="M123.5 177.3Q131.3 190.4 132.6 205.5" fill="none" stroke="#a18769" stroke-width="1.9" stroke-linecap="round"/><path d="M97.8 110.9Q100.5 122.7 93.5 132.6" fill="none" stroke="#efe0c4" stroke-width="1.4" stroke-linecap="round"/><path d="M60.5 42.0Q62.0 66.8 45.5 85.4" fill="none" stroke="#7c654d" stroke-width="1.9" stroke-linecap="round"/><path d="M84.4 83.9Q84.7 104.1 88.5 123.8" fill="none" stroke="#e3d0b0" stroke-width="1.7" stroke-linecap="round"/><path d="M68.8 86.4Q69.7 105.5 78.5 122.6" fill="none" stroke="#8d7358" stroke-width="1.7" stroke-linecap="round"/><path d="M54.9 60.8Q51.1 80.6 58.3 99.5" fill="none" stroke="#d8c19c" stroke-width="1.7" stroke-linecap="round"/><path d="M145.1 136.5Q145.9 152.7 146.6 168.9" fill="none" stroke="#a18769" stroke-width="2.2" stroke-linecap="round"/><path d="M97.5 148.6Q97.3 163.1 98.3 177.5" fill="none" stroke="#efe0c4" stroke-width="2.2" stroke-linecap="round"/><path d="M53.8 102.7Q44.9 126.6 56.2 149.3" fill="none" stroke="#7c654d" stroke-width="1.7" stroke-linecap="round"/><path d="M157.2 165.1Q166.6 181.3 162.9 199.6" fill="none" stroke="#e3d0b0" stroke-width="2.3" stroke-linecap="round"/><path d="M127.7 181.6Q118.9 200.5 119.5 221.4" fill="none" stroke="#8d7358" stroke-width="2.0" stroke-linecap="round"/><path d="M57.8 130.5Q58.8 144.0 66.6 155.0" fill="none" stroke="#d8c19c" stroke-width="1.3" stroke-linecap="round"/><path d="M56.4 47.2Q59.0 62.0 49.3 73.3" fill="none" stroke="#a18769" stroke-width="2.4" stroke-linecap="round"/><path d="M60.0 174.2Q47.1 195.5 54.6 219.3" fill="none" stroke="#efe0c4" stroke-width="2.0" stroke-linecap="round"/><path d="M144.8 36.5Q137.6 53.6 138.0 72.2" fill="none" stroke="#7c654d" stroke-width="1.3" stroke-linecap="round"/><path d="M138.5 189.6Q142.3 204.7 147.9 219.2" fill="none" stroke="#e3d0b0" stroke-width="2.4" stroke-linecap="round"/><path d="M75.2 61.0Q73.7 81.2 82.0 99.6" fill="none" stroke="#8d7358" stroke-width="1.8" stroke-linecap="round"/><path d="M90.8 97.9Q99.6 114.0 94.4 131.5" fill="none" stroke="#d8c19c" stroke-width="1.9" stroke-linecap="round"/><path d="M166.6 100.7Q161.8 113.3 162.0 126.8" fill="none" stroke="#a18769" stroke-width="2.3" stroke-linecap="round"/><path d="M129.2 118.5Q121.4 138.5 129.6 158.5" fill="none" stroke="#efe0c4" stroke-width="1.4" stroke-linecap="round"/><path d="M56.9 157.8Q52.6 175.6 46.4 192.8" fill="none" stroke="#7c654d" stroke-width="2.2" stroke-linecap="round"/><path d="M68.2 75.9Q75.6 93.9 76.2 113.4" fill="none" stroke="#e3d0b0" stroke-width="1.5" stroke-linecap="round"/><path d="M131.3 192.8Q136.1 213.2 137.2 234.2" fill="none" stroke="#8d7358" stroke-width="2.4" stroke-linecap="round"/><path d="M118.0 75.9Q120.4 86.9 122.4 98.1" fill="none" stroke="#d8c19c" stroke-width="1.7" stroke-linecap="round"/><path d="M66.4 91.8Q76.9 112.5 71.8 135.1" fill="none" stroke="#a18769" stroke-width="2.6" stroke-linecap="round"/><path d="M104.9 132.4Q98.1 155.3 105.9 177.8" fill="none" stroke="#efe0c4" stroke-width="2.0" stroke-linecap="round"/><path d="M105.1 153.2Q97.2 168.3 96.9 185.3" fill="none" stroke="#7c654d" stroke-width="2.5" stroke-linecap="round"/><path d="M103.3 69.5Q103.6 90.8 111.1 110.8" fill="none" stroke="#e3d0b0" stroke-width="2.5" stroke-linecap="round"/><path d="M151.7 71.6Q159.3 84.9 157.9 100.1" fill="none" stroke="#8d7358" stroke-width="2.2" stroke-linecap="round"/><path d="M152.3 183.7Q160.4 205.7 160.1 229.2" fill="none" stroke="#d8c19c" stroke-width="1.8" stroke-linecap="round"/><path d="M136.0 45.0Q146.9 65.4 148.8 88.5" fill="none" stroke="#a18769" stroke-width="1.7" stroke-linecap="round"/></g><path d="M48.3 181.9C53.4 174.8 61.7 174.2 67.2 169.9C72.6 165.7 71.1 158.5 80.9 156.2C90.6 153.9 116.8 153.4 125.4 156.2C134.0 159.1 128.3 167.7 132.2 173.4C136.2 179.1 145.4 183.9 149.4 190.5C153.4 197.1 175.1 209.1 156.2 212.8C137.4 216.5 54.3 217.9 36.3 212.8C18.3 207.6 43.2 189.1 48.3 181.9Z" fill="#e7b9a2" /><ellipse cx="104.8" cy="169.9" rx="24.0" ry="12.0" fill="#d29c84" filter="url(#mc)"/><ellipse cx="94.6" cy="199.1" rx="34.3" ry="10.3" fill="#efc8b4" filter="url(#mc)"/><path d="M62.0 87.7C64.3 80.3 68.6 74.3 74.0 70.6C79.4 66.9 87.1 65.4 94.6 65.4C102.0 65.4 112.3 66.9 118.5 70.6C124.8 74.3 129.1 81.4 132.2 87.7C135.4 94.0 136.8 101.4 137.4 108.3C138.0 115.1 137.4 122.0 135.7 128.8C134.0 135.7 131.1 143.7 127.1 149.4C123.1 155.1 117.1 160.2 111.7 163.1C106.3 165.9 100.3 167.4 94.6 166.5C88.9 165.7 82.3 162.5 77.4 157.9C72.6 153.4 68.3 146.2 65.4 139.1C62.6 132.0 60.9 123.7 60.3 115.1C59.7 106.6 59.7 95.1 62.0 87.7Z" fill="#ecc6b0" /><ellipse cx="96.3" cy="87.7" rx="29.1" ry="10.3" fill="#f3d6c4" filter="url(#mc)"/><ellipse cx="125.4" cy="132.2" rx="10.3" ry="24.0" fill="#d8a58d" filter="url(#mc)"/><ellipse cx="87.7" cy="149.4" rx="17.1" ry="10.3" fill="#f0cdb9" filter="url(#mc)"/><path d="M60.3 91.1C58.9 88.9 60.9 73.4 65.4 67.2C70.0 60.9 80.6 55.7 87.7 53.4C94.8 51.2 101.4 51.4 108.3 53.4C115.1 55.4 123.7 58.6 128.8 65.4C134.0 72.3 136.8 85.7 139.1 94.6C141.4 103.4 143.7 118.5 142.5 118.5C141.4 118.5 136.8 101.4 132.2 94.6C127.7 87.7 121.4 80.9 115.1 77.4C108.8 74.0 101.4 73.4 94.6 74.0C87.7 74.6 79.7 78.0 74.0 80.9C68.3 83.7 61.7 93.4 60.3 91.1Z" fill="#d3bb99" /><path d="M80.9 65.4C82.0 59.2 90.6 41.5 94.6 36.3C98.6 31.2 104.3 30.9 104.8 34.6C105.4 38.3 100.8 52.0 98.0 58.6C95.1 65.2 90.6 72.9 87.7 74.0C84.9 75.1 79.7 71.7 80.9 65.4Z" fill="#9a8166" filter="url(#mc)"/><ellipse cx="122.0" cy="65.4" rx="13.7" ry="8.6" fill="#dcc7a6" filter="url(#mc)"/><clipPath id="fc"><path d="M60.3 91.1C58.9 88.9 60.9 73.4 65.4 67.2C70.0 60.9 80.6 55.7 87.7 53.4C94.8 51.2 101.4 51.4 108.3 53.4C115.1 55.4 123.7 58.6 128.8 65.4C134.0 72.3 136.8 85.7 139.1 94.6C141.4 103.4 143.7 118.5 142.5 118.5C141.4 118.5 136.8 101.4 132.2 94.6C127.7 87.7 121.4 80.9 115.1 77.4C108.8 74.0 101.4 73.4 94.6 74.0C87.7 74.6 79.7 78.0 74.0 80.9C68.3 83.7 61.7 93.4 60.3 91.1Z"/></clipPath><g clip-path="url(#fc)" opacity="0.7"><path d="M111.5 101.7Q104.7 115.0 104.7 130.0" fill="none" stroke="#e8d6b6" stroke-width="2.5" stroke-linecap="round"/><path d="M62.7 83.8Q53.0 92.7 52.2 105.8" fill="none" stroke="#9a8064" stroke-width="1.4" stroke-linecap="round"/><path d="M98.9 69.5Q105.8 80.4 101.5 92.5" fill="none" stroke="#c9b08c" stroke-width="1.5" stroke-linecap="round"/><path d="M83.3 113.1Q79.3 120.7 80.0 129.3" fill="none" stroke="#efe2c8" stroke-width="1.4" stroke-linecap="round"/><path d="M111.1 61.7Q124.4 67.6 132.4 79.7" fill="none" stroke="#e8d6b6" stroke-width="1.5" stroke-linecap="round"/><path d="M141.1 110.2Q147.2 123.6 154.4 136.5" fill="none" stroke="#9a8064" stroke-width="2.1" stroke-linecap="round"/><path d="M77.1 114.7Q70.0 128.8 74.4 144.0" fill="none" stroke="#c9b08c" stroke-width="1.6" stroke-linecap="round"/><path d="M90.0 64.3Q95.8 69.2 99.3 76.0" fill="none" stroke="#efe2c8" stroke-width="2.0" stroke-linecap="round"/><path d="M60.6 97.6Q61.5 107.5 68.0 115.0" fill="none" stroke="#e8d6b6" stroke-width="1.9" stroke-linecap="round"/><path d="M86.3 84.8Q81.9 91.8 84.6 99.6" fill="none" stroke="#9a8064" stroke-width="1.2" stroke-linecap="round"/><path d="M122.0 108.4Q133.1 115.9 141.9 126.1" fill="none" stroke="#c9b08c" stroke-width="2.0" stroke-linecap="round"/><path d="M61.0 56.5Q73.2 65.8 78.1 80.3" fill="none" stroke="#efe2c8" stroke-width="2.3" stroke-linecap="round"/><path d="M136.7 114.8Q140.3 124.0 144.3 133.0" fill="none" stroke="#e8d6b6" stroke-width="2.3" stroke-linecap="round"/><path d="M69.2 102.2Q72.1 117.2 62.6 129.1" fill="none" stroke="#9a8064" stroke-width="2.5" stroke-linecap="round"/><path d="M67.8 75.6Q70.4 89.9 68.4 104.3" fill="none" stroke="#c9b08c" stroke-width="2.5" stroke-linecap="round"/><path d="M105.1 73.8Q111.9 80.0 112.2 89.1" fill="none" stroke="#efe2c8" stroke-width="1.4" stroke-linecap="round"/><path d="M117.0 118.3Q118.6 126.4 125.9 130.1" fill="none" stroke="#e8d6b6" stroke-width="1.9" stroke-linecap="round"/><path d="M93.7 68.9Q94.9 82.5 94.9 96.1" fill="none" stroke="#9a8064" stroke-width="1.8" stroke-linecap="round"/><path d="M64.9 113.1Q70.4 123.2 81.0 127.9" fill="none" stroke="#c9b08c" stroke-width="1.4" stroke-linecap="round"/><path d="M120.5 115.3Q125.6 128.6 120.3 141.9" fill="none" stroke="#efe2c8" stroke-width="1.8" stroke-linecap="round"/><path d="M72.6 108.4Q72.5 120.3 82.0 127.5" fill="none" stroke="#e8d6b6" stroke-width="2.4" stroke-linecap="round"/><path d="M140.6 83.0Q143.3 95.5 145.4 108.2" fill="none" stroke="#9a8064" stroke-width="1.6" stroke-linecap="round"/><path d="M93.5 63.0Q92.1 79.3 103.6 91.0" fill="none" stroke="#c9b08c" stroke-width="2.1" stroke-linecap="round"/><path d="M101.4 75.5Q105.7 84.0 113.8 88.9" fill="none" stroke="#efe2c8" stroke-width="2.4" stroke-linecap="round"/><path d="M90.0 104.6Q85.4 116.5 84.8 129.2" fill="none" stroke="#e8d6b6" stroke-width="2.3" stroke-linecap="round"/><path d="M90.2 99.3Q92.6 110.3 100.2 118.6" fill="none" stroke="#9a8064" stroke-width="2.2" stroke-linecap="round"/></g><path d="M65.4 86.0C67.2 85.4 72.3 82.6 75.7 82.6C79.1 82.6 84.3 85.4 86.0 86.0" fill="none" stroke="#8a6a50" stroke-width="2" stroke-linecap="round" /><path d="M101.4 86.0C103.4 85.4 109.4 82.3 113.4 82.6C117.4 82.9 123.4 86.9 125.4 87.7" fill="none" stroke="#8a6a50" stroke-width="2" stroke-linecap="round" /><ellipse cx="74.9" cy="94.6" rx="6.9" ry="2.9" fill="#5d4a3e" /><ellipse cx="109.6" cy="95.4" rx="7.2" ry="2.9" fill="#5d4a3e" /><ellipse cx="74.0" cy="94.6" rx="2.6" ry="2.6" fill="#2a2220" /><ellipse cx="109.1" cy="95.4" rx="2.6" ry="2.6" fill="#2a2220" /><ellipse cx="86.0" cy="120.3" rx="7.7" ry="3.8" fill="#d39f88" filter="url(#mc)"/><ellipse cx="80.9" cy="108.3" rx="2.7" ry="12.0" fill="#f5dccd" filter="url(#mc)"/><path d="M73.1 134.0C74.9 132.8 82.4 131.1 87.7 131.4C93.0 131.7 104.3 134.2 104.8 135.7C105.4 137.1 95.7 139.5 91.1 140.0C86.6 140.4 80.4 139.2 77.4 138.2C74.4 137.2 71.4 135.1 73.1 134.0Z" fill="#c48a7e" /><path d="M74.0 134.8C76.3 134.7 82.7 133.8 87.7 134.0C92.7 134.2 101.3 135.7 104.0 136.0" fill="none" stroke="#8a5048" stroke-width="1.4" stroke-linecap="round" /></g></g></svg></div>
<svg class="bdg" width="56" height="56" viewBox="-28 -28 56 56" style="left:1400.2px;top:626.0px"><circle r="25.8" fill="#5a5c5c"/><circle r="21.1" fill="#6bb700"/><path d="M-7.9 -0.2L-2.2 5.6L7.6 -4.9" fill="none" stroke="#5a5c5c" stroke-width="3.9"/></svg>
<div class="x" style="left:1260.60px;top:708.49px;font-size:26.4px;color:#fff;-webkit-text-stroke:0.4px #fff;letter-spacing:0.300px;transform:scaleX(1.0328);">Carole Poland</div>
<div class="av" style="left:1581px;top:475px;background:#fdefd3"></div>
<div class="x" style="left:1631.34px;top:535.50px;font-size:85.8px;color:#7d5c1c;transform:scaleX(0.9140);">HR</div>
<svg class="bdg" width="56" height="56" viewBox="-28 -28 56 56" style="left:1735.2px;top:626.0px"><circle r="25.8" fill="#5a5c5c"/><circle r="21.1" fill="#d74553"/></svg>
<div class="x" style="left:1605.66px;top:708.49px;font-size:26.4px;color:#fff;-webkit-text-stroke:0.4px #fff;letter-spacing:0.300px;transform:scaleX(1.0194);">Hilary Reyes</div>
<div class="av" style="left:576px;top:875px"><svg class="ph" width="210" height="210" viewBox="0 0 210 210"><defs><clipPath id="ca"><circle cx="105" cy="105" r="105"/></clipPath><filter id="ba" x="-10%" y="-10%" width="120%" height="120%"><feGaussianBlur stdDeviation="1.1"/></filter><filter id="sa" x="-30%" y="-30%" width="160%" height="160%"><feGaussianBlur stdDeviation="5"/></filter><filter id="ma" x="-30%" y="-30%" width="160%" height="160%"><feGaussianBlur stdDeviation="2.4"/></filter></defs><g clip-path="url(#ca)"><g filter="url(#ba)"><rect x="-5" y="-5" width="220" height="220" fill="#bcc6c3"/><ellipse cx="19.2" cy="104.8" rx="37.7" ry="68.5" fill="#a9b5b6" filter="url(#sa)"/><ellipse cx="173.4" cy="53.4" rx="51.4" ry="51.4" fill="#c4cecb" filter="url(#sa)"/><ellipse cx="190.5" cy="139.1" rx="34.3" ry="51.4" fill="#b4c0bf" filter="url(#sa)"/><ellipse cx="104.8" cy="10.6" rx="68.5" ry="17.1" fill="#c2cdca" filter="url(#sa)"/><ellipse cx="22.6" cy="56.9" rx="15.4" ry="20.6" fill="#cfd6d2" filter="url(#sa)"/><ellipse cx="207.6" cy="101.4" rx="6.9" ry="10.3" fill="#e8c8a8" filter="url(#ma)"/><path d="M36.3 115.1C31.9 109.4 30.6 97.4 30.3 87.7C30.0 78.0 31.3 66.3 34.6 56.9C37.9 47.5 43.5 37.7 50.0 31.2C56.6 24.6 65.4 19.8 74.0 17.5C82.6 15.2 93.4 15.5 101.4 17.5C109.4 19.5 115.7 24.3 122.0 29.5C128.3 34.6 134.0 42.0 139.1 48.3C144.2 54.6 148.5 63.2 152.8 67.2C157.1 71.1 164.2 68.9 164.8 72.3C165.4 75.7 156.5 82.3 156.2 87.7C155.9 93.1 162.8 99.1 163.1 104.8C163.4 110.5 157.1 117.4 157.9 122.0C158.8 126.5 167.7 126.5 168.2 132.2C168.8 138.0 162.2 148.8 161.4 156.2C160.5 163.7 163.9 169.7 163.1 176.8C162.2 183.9 160.2 194.2 156.2 199.1C152.2 203.9 146.0 207.3 139.1 205.9C132.2 204.5 120.8 198.8 115.1 190.5C109.4 182.2 114.5 167.7 104.8 156.2C95.1 144.8 68.3 128.8 56.9 122.0C45.5 115.1 40.7 120.8 36.3 115.1Z" fill="#4d2f1f" /><ellipse cx="146.0" cy="139.1" rx="15.4" ry="51.4" fill="#7c4f30" filter="url(#ma)"/><ellipse cx="157.9" cy="128.8" rx="6.9" ry="34.3" fill="#b58150" filter="url(#ma)"/><ellipse cx="149.4" cy="74.0" rx="10.3" ry="15.4" fill="#a87448" filter="url(#ma)"/><ellipse cx="91.1" cy="26.0" rx="29.1" ry="8.6" fill="#6d4329" filter="url(#ma)"/><ellipse cx="130.5" cy="181.9" rx="17.1" ry="20.6" fill="#3c2418" filter="url(#ma)"/><clipPath id="ha"><path d="M36.3 115.1C31.9 109.4 30.6 97.4 30.3 87.7C30.0 78.0 31.3 66.3 34.6 56.9C37.9 47.5 43.5 37.7 50.0 31.2C56.6 24.6 65.4 19.8 74.0 17.5C82.6 15.2 93.4 15.5 101.4 17.5C109.4 19.5 115.7 24.3 122.0 29.5C128.3 34.6 134.0 42.0 139.1 48.3C144.2 54.6 148.5 63.2 152.8 67.2C157.1 71.1 164.2 68.9 164.8 72.3C165.4 75.7 156.5 82.3 156.2 87.7C155.9 93.1 162.8 99.1 163.1 104.8C163.4 110.5 157.1 117.4 157.9 122.0C158.8 126.5 167.7 126.5 168.2 132.2C168.8 138.0 162.2 148.8 161.4 156.2C160.5 163.7 163.9 169.7 163.1 176.8C162.2 183.9 160.2 194.2 156.2 199.1C152.2 203.9 146.0 207.3 139.1 205.9C132.2 204.5 120.8 198.8 115.1 190.5C109.4 182.2 114.5 167.7 104.8 156.2C95.1 144.8 68.3 128.8 56.9 122.0C45.5 115.1 40.7 120.8 36.3 115.1Z"/></clipPath><g clip-path="url(#ha)" opacity="0.75"><path d="M92.7 123.0Q85.2 134.3 77.8 145.7" fill="none" stroke="#2e1a10" stroke-width="2.0" stroke-linecap="round"/><path d="M55.8 113.9Q60.8 132.2 51.7 148.7" fill="none" stroke="#8a5a36" stroke-width="1.6" stroke-linecap="round"/><path d="M42.8 170.0Q37.0 177.5 39.2 186.6" fill="none" stroke="#5c3824" stroke-width="2.6" stroke-linecap="round"/><path d="M120.5 133.5Q125.1 140.2 130.1 146.7" fill="none" stroke="#b98a58" stroke-width="1.3" stroke-linecap="round"/><path d="M56.6 63.1Q67.1 71.7 76.5 81.5" fill="none" stroke="#3a2216" stroke-width="2.4" stroke-linecap="round"/><path d="M101.9 138.1Q104.0 154.0 104.7 169.9" fill="none" stroke="#6e4428" stroke-width="1.6" stroke-linecap="round"/><path d="M167.9 205.1Q163.5 221.3 153.6 234.8" fill="none" stroke="#2e1a10" stroke-width="1.5" stroke-linecap="round"/><path d="M70.2 30.7Q61.8 41.4 61.9 54.9" fill="none" stroke="#8a5a36" stroke-width="1.7" stroke-linecap="round"/><path d="M162.4 177.1Q167.7 187.2 178.5 190.7" fill="none" stroke="#5c3824" stroke-width="1.9" stroke-linecap="round"/><path d="M165.5 92.4Q173.1 106.6 186.9 115.0" fill="none" stroke="#b98a58" stroke-width="1.6" stroke-linecap="round"/><path d="M42.3 80.1Q37.3 97.7 21.9 107.5" fill="none" stroke="#3a2216" stroke-width="1.5" stroke-linecap="round"/><path d="M44.3 28.8Q39.9 37.9 36.8 47.6" fill="none" stroke="#6e4428" stroke-width="1.8" stroke-linecap="round"/><path d="M56.6 155.4Q71.1 164.0 76.1 180.1" fill="none" stroke="#2e1a10" stroke-width="1.8" stroke-linecap="round"/><path d="M59.7 68.3Q51.7 84.4 38.3 96.3" fill="none" stroke="#8a5a36" stroke-width="2.4" stroke-linecap="round"/><path d="M59.4 91.8Q57.9 108.6 45.2 119.8" fill="none" stroke="#5c3824" stroke-width="2.6" stroke-linecap="round"/><path d="M59.7 66.1Q58.0 78.2 51.7 88.7" fill="none" stroke="#b98a58" stroke-width="1.3" stroke-linecap="round"/><path d="M42.7 127.3Q51.6 139.8 57.1 154.1" fill="none" stroke="#3a2216" stroke-width="1.8" stroke-linecap="round"/><path d="M162.6 108.6Q167.9 127.2 161.5 145.4" fill="none" stroke="#6e4428" stroke-width="1.4" stroke-linecap="round"/><path d="M155.6 171.6Q158.2 181.8 165.1 189.8" fill="none" stroke="#2e1a10" stroke-width="2.5" stroke-linecap="round"/><path d="M57.4 196.5Q51.0 210.4 42.5 223.1" fill="none" stroke="#8a5a36" stroke-width="1.3" stroke-linecap="round"/><path d="M35.7 198.9Q47.0 211.4 51.4 227.8" fill="none" stroke="#5c3824" stroke-width="2.4" stroke-linecap="round"/><path d="M112.6 72.8Q127.9 82.5 131.3 100.3" fill="none" stroke="#b98a58" stroke-width="1.5" stroke-linecap="round"/><path d="M107.5 178.1Q101.7 189.0 105.4 200.7" fill="none" stroke="#3a2216" stroke-width="1.5" stroke-linecap="round"/><path d="M32.6 68.2Q36.9 76.3 35.6 85.4" fill="none" stroke="#6e4428" stroke-width="1.7" stroke-linecap="round"/><path d="M109.2 42.3Q106.2 62.8 120.4 77.9" fill="none" stroke="#2e1a10" stroke-width="2.1" stroke-linecap="round"/><path d="M125.6 127.6Q134.0 131.8 135.9 141.0" fill="none" stroke="#8a5a36" stroke-width="2.5" stroke-linecap="round"/><path d="M127.0 198.9Q138.8 209.1 150.3 219.8" fill="none" stroke="#5c3824" stroke-width="2.2" stroke-linecap="round"/><path d="M74.3 205.8Q81.8 218.8 94.2 227.0" fill="none" stroke="#b98a58" stroke-width="2.5" stroke-linecap="round"/><path d="M132.0 150.1Q127.7 168.8 118.1 185.4" fill="none" stroke="#3a2216" stroke-width="2.2" stroke-linecap="round"/><path d="M154.5 181.6Q152.1 200.1 162.1 215.8" fill="none" stroke="#6e4428" stroke-width="2.0" stroke-linecap="round"/><path d="M116.5 89.5Q122.3 105.1 115.2 120.1" fill="none" stroke="#2e1a10" stroke-width="2.1" stroke-linecap="round"/><path d="M167.3 183.3Q161.0 194.7 160.5 207.7" fill="none" stroke="#8a5a36" stroke-width="2.0" stroke-linecap="round"/><path d="M91.1 175.5Q108.4 182.6 114.0 200.5" fill="none" stroke="#5c3824" stroke-width="2.0" stroke-linecap="round"/><path d="M96.6 60.9Q92.0 74.1 90.4 88.1" fill="none" stroke="#b98a58" stroke-width="2.5" stroke-linecap="round"/><path d="M65.6 19.6Q76.3 32.6 78.2 49.3" fill="none" stroke="#3a2216" stroke-width="1.4" stroke-linecap="round"/><path d="M155.2 141.8Q161.7 159.7 161.9 178.6" fill="none" stroke="#6e4428" stroke-width="2.1" stroke-linecap="round"/><path d="M57.7 98.7Q43.8 113.4 43.2 133.7" fill="none" stroke="#2e1a10" stroke-width="1.7" stroke-linecap="round"/><path d="M110.7 77.1Q115.6 91.0 127.8 99.2" fill="none" stroke="#8a5a36" stroke-width="2.4" stroke-linecap="round"/><path d="M128.4 196.5Q133.1 205.4 136.9 214.7" fill="none" stroke="#5c3824" stroke-width="1.6" stroke-linecap="round"/><path d="M59.8 95.5Q60.9 109.6 56.8 123.2" fill="none" stroke="#b98a58" stroke-width="2.4" stroke-linecap="round"/><path d="M165.7 102.7Q169.2 111.0 177.2 114.9" fill="none" stroke="#3a2216" stroke-width="1.3" stroke-linecap="round"/><path d="M128.0 125.0Q142.4 138.0 141.3 157.4" fill="none" stroke="#6e4428" stroke-width="1.4" stroke-linecap="round"/><path d="M93.0 22.1Q92.1 33.6 84.0 41.8" fill="none" stroke="#2e1a10" stroke-width="1.3" stroke-linecap="round"/><path d="M117.1 101.6Q110.4 116.8 113.4 133.1" fill="none" stroke="#8a5a36" stroke-width="2.5" stroke-linecap="round"/><path d="M124.7 55.0Q130.9 64.5 127.3 75.2" fill="none" stroke="#5c3824" stroke-width="1.9" stroke-linecap="round"/><path d="M128.8 51.2Q131.9 63.2 139.3 73.2" fill="none" stroke="#b98a58" stroke-width="1.9" stroke-linecap="round"/><path d="M115.1 160.0Q112.6 178.7 123.9 193.8" fill="none" stroke="#3a2216" stroke-width="1.3" stroke-linecap="round"/><path d="M158.9 153.6Q165.9 165.2 175.6 174.7" fill="none" stroke="#6e4428" stroke-width="2.5" stroke-linecap="round"/><path d="M82.3 124.7Q66.9 136.2 65.2 155.3" fill="none" stroke="#2e1a10" stroke-width="1.8" stroke-linecap="round"/><path d="M120.1 56.1Q113.1 72.6 110.9 90.5" fill="none" stroke="#8a5a36" stroke-width="2.2" stroke-linecap="round"/><path d="M59.7 187.1Q47.0 202.1 35.3 218.1" fill="none" stroke="#5c3824" stroke-width="2.3" stroke-linecap="round"/><path d="M74.5 188.9Q73.5 202.1 63.4 210.7" fill="none" stroke="#b98a58" stroke-width="1.8" stroke-linecap="round"/><path d="M106.2 162.2Q104.5 170.8 108.0 178.8" fill="none" stroke="#3a2216" stroke-width="1.3" stroke-linecap="round"/><path d="M140.6 50.1Q152.5 64.3 152.5 82.9" fill="none" stroke="#6e4428" stroke-width="1.4" stroke-linecap="round"/><path d="M101.6 153.8Q88.0 165.4 87.5 183.2" fill="none" stroke="#2e1a10" stroke-width="1.9" stroke-linecap="round"/><path d="M161.2 33.7Q171.0 44.6 175.6 58.5" fill="none" stroke="#8a5a36" stroke-width="2.2" stroke-linecap="round"/><path d="M118.4 116.0Q114.5 130.4 105.6 142.5" fill="none" stroke="#5c3824" stroke-width="1.7" stroke-linecap="round"/><path d="M146.9 187.2Q149.0 207.2 165.8 218.3" fill="none" stroke="#b98a58" stroke-width="1.9" stroke-linecap="round"/><path d="M109.3 55.3Q108.3 69.4 110.2 83.4" fill="none" stroke="#3a2216" stroke-width="1.2" stroke-linecap="round"/><path d="M164.0 114.7Q167.2 132.1 172.5 148.9" fill="none" stroke="#6e4428" stroke-width="1.9" stroke-linecap="round"/><path d="M125.6 29.9Q120.0 43.0 126.3 55.8" fill="none" stroke="#2e1a10" stroke-width="2.5" stroke-linecap="round"/><path d="M67.4 106.6Q72.4 119.6 83.9 127.3" fill="none" stroke="#8a5a36" stroke-width="2.5" stroke-linecap="round"/><path d="M96.0 77.2Q98.9 93.8 112.7 103.2" fill="none" stroke="#5c3824" stroke-width="1.4" stroke-linecap="round"/><path d="M137.8 21.8Q141.9 31.9 149.3 39.9" fill="none" stroke="#b98a58" stroke-width="1.7" stroke-linecap="round"/><path d="M79.3 134.3Q95.0 142.9 101.1 159.7" fill="none" stroke="#3a2216" stroke-width="1.9" stroke-linecap="round"/><path d="M64.9 54.7Q67.0 67.9 65.9 81.2" fill="none" stroke="#6e4428" stroke-width="1.8" stroke-linecap="round"/><path d="M103.3 47.6Q109.6 62.0 119.6 74.1" fill="none" stroke="#2e1a10" stroke-width="1.9" stroke-linecap="round"/><path d="M147.7 132.7Q140.5 141.2 137.9 152.0" fill="none" stroke="#8a5a36" stroke-width="2.3" stroke-linecap="round"/><path d="M154.8 77.0Q166.8 92.7 168.9 112.5" fill="none" stroke="#5c3824" stroke-width="2.6" stroke-linecap="round"/><path d="M152.7 42.7Q164.2 55.5 168.6 72.1" fill="none" stroke="#b98a58" stroke-width="1.3" stroke-linecap="round"/><path d="M145.1 96.9Q142.5 106.1 138.2 114.7" fill="none" stroke="#3a2216" stroke-width="2.2" stroke-linecap="round"/><path d="M32.8 55.3Q20.3 72.1 25.3 92.5" fill="none" stroke="#6e4428" stroke-width="1.4" stroke-linecap="round"/><path d="M100.1 160.3Q106.4 176.1 102.7 192.7" fill="none" stroke="#2e1a10" stroke-width="1.3" stroke-linecap="round"/><path d="M45.0 24.5Q44.1 38.7 45.1 52.9" fill="none" stroke="#8a5a36" stroke-width="1.4" stroke-linecap="round"/><path d="M55.8 55.9Q39.5 70.2 38.6 91.8" fill="none" stroke="#5c3824" stroke-width="1.3" stroke-linecap="round"/><path d="M38.9 196.8Q44.3 213.3 43.9 230.8" fill="none" stroke="#b98a58" stroke-width="1.9" stroke-linecap="round"/><path d="M101.4 98.5Q99.2 106.5 100.2 114.8" fill="none" stroke="#3a2216" stroke-width="2.4" stroke-linecap="round"/><path d="M55.3 103.0Q55.4 116.5 48.0 127.7" fill="none" stroke="#6e4428" stroke-width="1.4" stroke-linecap="round"/><path d="M101.0 20.4Q89.0 33.8 83.2 50.8" fill="none" stroke="#2e1a10" stroke-width="2.4" stroke-linecap="round"/><path d="M117.1 93.7Q109.4 107.2 115.2 121.7" fill="none" stroke="#8a5a36" stroke-width="2.3" stroke-linecap="round"/></g><path d="M22.6 171.6C25.5 161.9 31.5 163.4 36.3 156.2C41.2 149.1 47.2 130.0 51.7 128.8C56.3 127.7 58.9 139.7 63.7 149.4C68.6 159.1 74.0 177.4 80.9 187.1C87.7 196.8 99.1 203.1 104.8 207.6C110.5 212.2 129.4 213.3 115.1 214.5C100.8 215.6 34.6 221.6 19.2 214.5C3.8 207.3 19.8 181.4 22.6 171.6Z" fill="#df3f28" /><ellipse cx="41.5" cy="173.4" rx="13.7" ry="20.6" fill="#e8563a" filter="url(#ma)"/><path d="M96.3 202.5L115.1 197.3L122.0 212.8L101.4 212.8Z" fill="#df3f28" /><path d="M52.6 129.7C53.4 127.4 59.6 131.2 65.4 135.7C71.3 140.1 80.6 149.1 87.7 156.2C94.8 163.4 102.6 171.9 108.3 178.5C114.0 185.1 122.0 191.9 122.0 195.6C122.0 199.3 112.8 199.1 108.3 200.8C103.7 202.5 99.7 209.6 94.6 205.9C89.4 202.2 83.1 187.9 77.4 178.5C71.7 169.1 64.4 157.5 60.3 149.4C56.2 141.2 51.7 132.0 52.6 129.7Z" fill="#f1f0ec" /><path d="M41.5 154.5C44.6 157.7 53.7 165.9 60.3 173.4C66.9 180.8 77.4 194.8 80.9 199.1" fill="none" stroke="#f1e6e0" stroke-width="2.2" stroke-linecap="round" /><ellipse cx="87.7" cy="173.4" rx="10.3" ry="20.6" fill="#d9d6d0" transform="rotate(-35 87.7 173.4)" filter="url(#ma)"/><path d="M58.6 127.1C59.7 127.4 66.3 135.4 74.0 139.1C81.7 142.8 96.8 148.2 104.8 149.4C112.8 150.5 120.3 142.0 122.0 146.0C123.7 150.0 118.0 167.9 115.1 173.4C112.3 178.8 109.4 181.4 104.8 178.5C100.3 175.6 94.0 163.1 87.7 156.2C81.4 149.4 72.0 142.2 67.2 137.4C62.3 132.5 57.4 126.8 58.6 127.1Z" fill="#d5946f" /><path d="M43.2 91.1C42.9 82.9 45.2 74.3 48.3 67.2C51.4 60.0 56.0 53.2 62.0 48.3C68.0 43.5 77.1 39.2 84.3 38.0C91.4 36.9 98.6 38.9 104.8 41.5C111.1 44.0 117.4 48.0 122.0 53.4C126.5 58.9 129.7 66.6 132.2 74.0C134.8 81.4 137.1 90.0 137.4 98.0C137.7 106.0 136.5 114.8 134.0 122.0C131.4 129.1 127.1 136.0 122.0 140.8C116.8 145.7 109.7 149.7 103.1 151.1C96.6 152.5 89.1 151.9 82.6 149.4C76.0 146.8 69.2 141.1 63.7 135.7C58.3 130.2 53.4 124.3 50.0 116.8C46.6 109.4 43.5 99.4 43.2 91.1Z" fill="#e3ab8a" /><ellipse cx="87.7" cy="56.9" rx="27.4" ry="12.0" fill="#ecbd9c" filter="url(#ma)"/><ellipse cx="74.0" cy="115.1" rx="13.7" ry="15.4" fill="#e9b598" filter="url(#ma)"/><ellipse cx="118.5" cy="118.5" rx="12.0" ry="15.4" fill="#e7b092" filter="url(#ma)"/><ellipse cx="56.9" cy="94.6" rx="6.9" ry="20.6" fill="#c98c68" filter="url(#ma)"/><path d="M74.0 19.2C73.4 20.9 87.7 23.8 94.6 27.8C101.4 31.7 109.4 37.5 115.1 43.2C120.8 48.9 125.4 55.7 128.8 62.0C132.2 68.3 132.8 76.6 135.7 80.9C138.5 85.1 143.1 89.4 146.0 87.7C148.8 86.0 153.9 77.4 152.8 70.6C151.7 63.7 144.8 53.7 139.1 46.6C133.4 39.5 125.4 32.6 118.5 27.8C111.7 22.9 105.4 18.9 98.0 17.5C90.6 16.0 74.6 17.5 74.0 19.2Z" fill="#4d2f1f" /><path d="M36.3 104.8C34.3 102.0 32.0 86.0 32.9 77.4C33.7 68.9 37.5 60.3 41.5 53.4C45.5 46.6 51.4 40.9 56.9 36.3C62.3 31.7 73.4 23.8 74.0 26.0C74.6 28.3 64.3 42.0 60.3 50.0C56.3 58.0 52.6 66.6 50.0 74.0C47.5 81.4 47.2 89.4 44.9 94.6C42.6 99.7 38.3 107.7 36.3 104.8Z" fill="#4a2c1d" /><path d="M74.0 80.9C75.7 80.4 80.9 78.1 84.3 78.3C87.7 78.4 92.8 81.1 94.6 81.7" fill="none" stroke="#2c1c16" stroke-width="3" stroke-linecap="round" /><path d="M111.7 80.9C113.1 80.4 117.4 78.3 120.3 78.3C123.1 78.3 127.4 80.4 128.8 80.9" fill="none" stroke="#2c1c16" stroke-width="3" stroke-linecap="round" /><path d="M70.6 70.6C72.9 69.9 80.0 66.4 84.3 66.3C88.6 66.2 94.3 69.2 96.3 69.7" fill="none" stroke="#6b4632" stroke-width="1.8" stroke-linecap="round" /><path d="M110.0 69.7C111.7 69.2 116.8 66.3 120.3 66.3C123.7 66.3 128.8 69.2 130.5 69.7" fill="none" stroke="#6b4632" stroke-width="1.8" stroke-linecap="round" /><ellipse cx="104.8" cy="103.1" rx="10.3" ry="3.8" fill="#cc8c6e" filter="url(#ma)"/><path d="M86.0 117.7C87.7 116.5 97.1 116.3 103.1 116.0C109.1 115.7 119.7 115.0 122.0 116.0C124.3 117.0 119.7 120.4 116.8 122.0C114.0 123.5 108.8 125.3 104.8 125.4C100.8 125.5 96.0 124.1 92.8 122.8C89.7 121.5 84.3 118.8 86.0 117.7Z" fill="#bd5a64" /><path d="M87.7 118.2C90.6 118.4 99.3 119.6 104.8 119.4C110.4 119.2 118.4 117.3 121.1 116.8" fill="none" stroke="#8a3a40" stroke-width="1.3" stroke-linecap="round" /></g></g></svg></div>
<svg class="bdg" width="56" height="56" viewBox="-28 -28 56 56" style="left:730.2px;top:1026.0px"><circle r="25.8" fill="#5a5c5c"/><circle r="21.1" fill="#5a5c5c"/><circle r="19.2" fill="none" stroke="#a2a3a3" stroke-width="3.8"/><path d="M-6 -6L6 6M6 -6L-6 6" fill="none" stroke="#a2a3a3" stroke-width="3.6"/></svg>
<div class="x" style="left:588.06px;top:1108.49px;font-size:26.4px;color:#fff;-webkit-text-stroke:0.4px #fff;letter-spacing:0.300px;transform:scaleX(1.0434);">Amanda Brady</div>
<div class="av" style="left:911px;top:875px;background:#e9dfdb"></div>
<div class="x" style="left:967.54px;top:935.70px;font-size:85.8px;color:#5c3d30;transform:scaleX(0.9052);">HT</div>
<svg class="bdg" width="56" height="56" viewBox="-28 -28 56 56" style="left:1065.2px;top:1026.0px"><circle r="25.8" fill="#5a5c5c"/><circle r="21.1" fill="#d74553"/><path d="M-6.6 0H6.6" fill="none" stroke="#5a5c5c" stroke-width="4" stroke-linecap="round"/></svg>
<div class="x" style="left:920.10px;top:1108.49px;font-size:26.4px;color:#fff;-webkit-text-stroke:0.4px #fff;letter-spacing:0.300px;transform:scaleX(1.0583);">Hartuo Tanaka</div>
<div class="av" style="left:1246px;top:875px"><svg class="ph" width="210" height="210" viewBox="0 0 210 210"><defs><clipPath id="ck"><circle cx="105" cy="105" r="105"/></clipPath><filter id="bk" x="-10%" y="-10%" width="120%" height="120%"><feGaussianBlur stdDeviation="1.1"/></filter><filter id="sk" x="-30%" y="-30%" width="160%" height="160%"><feGaussianBlur stdDeviation="5"/></filter><filter id="mk" x="-30%" y="-30%" width="160%" height="160%"><feGaussianBlur stdDeviation="2.4"/></filter></defs><g clip-path="url(#ck)"><g filter="url(#bk)"><rect x="-5" y="-5" width="220" height="220" fill="#4b4541"/><path d="M-1.4 -1.4L212.8 -1.4L212.8 26.0L132.2 25.2L39.7 23.5L-1.4 26.0Z" fill="#e6dfd2" /><ellipse cx="108.3" cy="10.6" rx="18.8" ry="13.7" fill="#f2eee6" filter="url(#mk)"/><ellipse cx="156.2" cy="14.0" rx="20.6" ry="8.6" fill="#cdc6b4" filter="url(#mk)"/><path d="M-1.4 23.5L39.7 23.5L39.7 94.6L-1.4 94.6Z" fill="#5e5654" /><ellipse cx="19.2" cy="62.0" rx="15.4" ry="29.1" fill="#6c6260" filter="url(#sk)"/><path d="M-1.4 92.8C3.5 81.1 19.2 87.4 27.8 87.7C36.3 88.0 45.2 88.3 50.0 94.6C54.9 100.8 55.2 114.3 56.9 125.4C58.6 136.5 65.2 154.2 60.3 161.4C55.4 168.5 38.0 168.8 27.8 168.2C17.5 167.7 3.5 170.5 -1.4 157.9C-6.2 145.4 -6.2 104.6 -1.4 92.8Z" fill="#7a93d6" /><ellipse cx="15.8" cy="108.3" rx="10.3" ry="6.9" fill="#3f5cc0" filter="url(#mk)"/><ellipse cx="32.9" cy="130.5" rx="12.0" ry="6.9" fill="#4a66c4" filter="url(#mk)"/><ellipse cx="12.3" cy="139.1" rx="8.6" ry="8.6" fill="#e4e8f6" filter="url(#mk)"/><ellipse cx="41.5" cy="111.7" rx="8.6" ry="6.9" fill="#dfe4f4" filter="url(#mk)"/><ellipse cx="26.0" cy="152.8" rx="13.7" ry="6.9" fill="#e6eaf6" filter="url(#mk)"/><ellipse cx="7.2" cy="122.0" rx="6.9" ry="5.1" fill="#dfe4f4" filter="url(#mk)"/><ellipse cx="44.9" cy="147.7" rx="8.6" ry="6.9" fill="#5571c8" filter="url(#mk)"/><path d="M-1.4 163.1L63.7 161.4L74.0 175.1L67.2 212.8L-1.4 212.8Z" fill="#aeb0b8" /><path d="M19.2 169.1L65.4 164.8L67.2 173.4L24.3 175.1Z" fill="#55555c" /><path d="M152.8 140.0L212.8 138.2L212.8 157.9L156.2 156.2Z" fill="#c9cacf" /><path d="M156.2 156.2L212.8 157.9L212.8 212.8L156.2 212.8Z" fill="#9a9ca6" /><path d="M63.7 187.1C66.0 180.5 67.2 174.2 74.0 173.4C80.9 172.5 94.0 182.5 104.8 181.9C115.7 181.4 130.2 174.8 139.1 169.9C148.0 165.1 153.4 153.7 157.9 152.8C162.5 151.9 163.9 154.8 166.5 164.8C169.1 174.8 191.1 204.8 173.4 212.8C155.7 220.8 78.6 217.0 60.3 212.8C42.0 208.5 61.4 193.6 63.7 187.1Z" fill="#8796b4" /><path d="M108.3 190.5C110.5 193.3 119.7 204.8 122.0 207.6" fill="none" stroke="#d48a84" stroke-width="2" stroke-linecap="round" /><path d="M128.8 176.8C132.2 180.5 146.0 195.3 149.4 199.1" fill="none" stroke="#d48a84" stroke-width="2" stroke-linecap="round" /><path d="M104.8 197.3C113.4 194.2 147.7 181.6 156.2 178.5" fill="none" stroke="#c7cbe0" stroke-width="2" stroke-linecap="round" /><path d="M94.6 205.9C104.8 203.1 146.0 191.6 156.2 188.8" fill="none" stroke="#5d6c96" stroke-width="2.5" stroke-linecap="round" /><path d="M55.2 195.6L65.4 190.5L65.4 200.8L56.9 204.2Z" fill="#c8463c" /><ellipse cx="80.9" cy="200.8" rx="10.3" ry="10.3" fill="#4a4a58" filter="url(#mk)"/><path d="M70.6 156.2C75.1 155.4 93.4 171.6 104.8 171.6C116.3 171.6 131.7 157.1 139.1 156.2C146.5 155.4 150.0 162.8 149.4 166.5C148.8 170.2 143.1 175.4 135.7 178.5C128.3 181.6 114.5 185.6 104.8 185.4C95.1 185.1 83.1 181.6 77.4 176.8C71.7 171.9 66.0 157.1 70.6 156.2Z" fill="#4f3226" /><path d="M53.4 74.0C54.6 64.3 55.2 57.2 58.6 50.0C62.0 42.9 67.4 36.0 74.0 31.2C80.6 26.3 89.4 22.0 98.0 20.9C106.6 19.8 117.4 21.2 125.4 24.3C133.4 27.5 140.5 33.2 146.0 39.7C151.4 46.3 155.4 55.2 157.9 63.7C160.5 72.3 161.7 81.4 161.4 91.1C161.1 100.8 158.5 112.8 156.2 122.0C153.9 131.1 151.7 139.1 147.7 146.0C143.7 152.8 138.8 158.5 132.2 163.1C125.7 167.7 115.7 171.9 108.3 173.4C100.8 174.8 94.0 173.9 87.7 171.6C81.4 169.4 75.4 165.1 70.6 159.7C65.7 154.2 61.7 147.7 58.6 139.1C55.4 130.5 52.6 119.1 51.7 108.3C50.9 97.4 52.3 83.7 53.4 74.0Z" fill="#80574a" /><path d="M56.9 60.3C55.7 59.4 62.0 42.7 67.2 36.3C72.3 29.9 79.7 24.8 87.7 21.8C95.7 18.8 106.6 17.0 115.1 18.3C123.7 19.6 132.2 23.6 139.1 29.5C146.0 35.3 152.5 44.9 156.2 53.4C159.9 62.0 161.7 76.9 161.4 80.9C161.1 84.9 157.4 82.0 154.5 77.4C151.7 72.9 149.1 60.3 144.2 53.4C139.4 46.6 133.1 39.7 125.4 36.3C117.7 32.9 106.6 32.0 98.0 32.9C89.4 33.7 80.9 36.9 74.0 41.5C67.2 46.0 58.0 61.2 56.9 60.3Z" fill="#3a3030" /><clipPath id="hk"><path d="M56.9 60.3C55.7 59.4 62.0 42.7 67.2 36.3C72.3 29.9 79.7 24.8 87.7 21.8C95.7 18.8 106.6 17.0 115.1 18.3C123.7 19.6 132.2 23.6 139.1 29.5C146.0 35.3 152.5 44.9 156.2 53.4C159.9 62.0 161.7 76.9 161.4 80.9C161.1 84.9 157.4 82.0 154.5 77.4C151.7 72.9 149.1 60.3 144.2 53.4C139.4 46.6 133.1 39.7 125.4 36.3C117.7 32.9 106.6 32.0 98.0 32.9C89.4 33.7 80.9 36.9 74.0 41.5C67.2 46.0 58.0 61.2 56.9 60.3Z"/></clipPath><g clip-path="url(#hk)" opacity="0.8"><ellipse cx="156.8" cy="77.6" rx="1.6" ry="1.5" fill="#2a2222" transform="rotate(10 156.8 77.6)"/><ellipse cx="133.8" cy="60.2" rx="2.5" ry="2.0" fill="#55484a" transform="rotate(55 133.8 60.2)"/><ellipse cx="117.6" cy="28.2" rx="2.2" ry="1.9" fill="#332a2a" transform="rotate(78 117.6 28.2)"/><ellipse cx="160.8" cy="77.7" rx="2.3" ry="1.4" fill="#6a5c60" transform="rotate(98 160.8 77.7)"/><ellipse cx="60.6" cy="20.0" rx="2.0" ry="1.4" fill="#2a2222" transform="rotate(84 60.6 20.0)"/><ellipse cx="150.1" cy="51.2" rx="1.9" ry="1.0" fill="#55484a" transform="rotate(101 150.1 51.2)"/><ellipse cx="90.9" cy="26.9" rx="3.2" ry="2.7" fill="#332a2a" transform="rotate(92 90.9 26.9)"/><ellipse cx="75.9" cy="74.2" rx="2.7" ry="2.6" fill="#6a5c60" transform="rotate(143 75.9 74.2)"/><ellipse cx="136.6" cy="67.7" rx="3.2" ry="3.1" fill="#2a2222" transform="rotate(64 136.6 67.7)"/><ellipse cx="73.7" cy="65.5" rx="2.3" ry="1.7" fill="#55484a" transform="rotate(129 73.7 65.5)"/><ellipse cx="108.1" cy="76.2" rx="2.9" ry="2.0" fill="#332a2a" transform="rotate(90 108.1 76.2)"/><ellipse cx="149.1" cy="74.6" rx="2.5" ry="2.4" fill="#6a5c60" transform="rotate(83 149.1 74.6)"/><ellipse cx="132.5" cy="48.8" rx="2.1" ry="1.7" fill="#2a2222" transform="rotate(40 132.5 48.8)"/><ellipse cx="74.2" cy="75.1" rx="3.0" ry="2.0" fill="#55484a" transform="rotate(48 74.2 75.1)"/><ellipse cx="156.9" cy="62.5" rx="2.4" ry="2.0" fill="#332a2a" transform="rotate(91 156.9 62.5)"/><ellipse cx="118.3" cy="37.8" rx="2.4" ry="2.3" fill="#6a5c60" transform="rotate(37 118.3 37.8)"/><ellipse cx="122.0" cy="23.0" rx="2.7" ry="2.6" fill="#2a2222" transform="rotate(148 122.0 23.0)"/><ellipse cx="76.9" cy="64.9" rx="2.6" ry="1.7" fill="#55484a" transform="rotate(11 76.9 64.9)"/><ellipse cx="80.6" cy="73.1" rx="2.4" ry="2.2" fill="#332a2a" transform="rotate(19 80.6 73.1)"/><ellipse cx="82.5" cy="31.5" rx="2.2" ry="1.9" fill="#6a5c60" transform="rotate(159 82.5 31.5)"/><ellipse cx="60.2" cy="41.0" rx="2.6" ry="1.4" fill="#2a2222" transform="rotate(31 60.2 41.0)"/><ellipse cx="156.6" cy="19.9" rx="1.5" ry="1.0" fill="#55484a" transform="rotate(131 156.6 19.9)"/><ellipse cx="141.9" cy="28.2" rx="2.7" ry="1.9" fill="#332a2a" transform="rotate(33 141.9 28.2)"/><ellipse cx="61.4" cy="80.2" rx="1.6" ry="1.0" fill="#6a5c60" transform="rotate(27 61.4 80.2)"/><ellipse cx="121.2" cy="64.8" rx="2.1" ry="1.1" fill="#2a2222" transform="rotate(20 121.2 64.8)"/><ellipse cx="103.8" cy="66.2" rx="3.0" ry="2.7" fill="#55484a" transform="rotate(133 103.8 66.2)"/><ellipse cx="147.0" cy="62.4" rx="1.9" ry="1.6" fill="#332a2a" transform="rotate(85 147.0 62.4)"/><ellipse cx="89.9" cy="24.7" rx="3.0" ry="1.7" fill="#6a5c60" transform="rotate(81 89.9 24.7)"/><ellipse cx="118.0" cy="42.9" rx="1.7" ry="1.7" fill="#2a2222" transform="rotate(93 118.0 42.9)"/><ellipse cx="83.9" cy="56.2" rx="1.5" ry="1.2" fill="#55484a" transform="rotate(76 83.9 56.2)"/><ellipse cx="71.6" cy="21.9" rx="1.8" ry="1.0" fill="#332a2a" transform="rotate(6 71.6 21.9)"/><ellipse cx="123.2" cy="50.1" rx="3.1" ry="3.1" fill="#6a5c60" transform="rotate(177 123.2 50.1)"/><ellipse cx="81.2" cy="46.1" rx="2.5" ry="2.0" fill="#2a2222" transform="rotate(45 81.2 46.1)"/><ellipse cx="140.5" cy="62.7" rx="2.2" ry="1.7" fill="#55484a" transform="rotate(46 140.5 62.7)"/><ellipse cx="57.4" cy="20.5" rx="1.7" ry="1.5" fill="#332a2a" transform="rotate(74 57.4 20.5)"/><ellipse cx="82.0" cy="24.6" rx="1.9" ry="1.2" fill="#6a5c60" transform="rotate(33 82.0 24.6)"/><ellipse cx="111.3" cy="47.4" rx="2.6" ry="1.6" fill="#2a2222" transform="rotate(56 111.3 47.4)"/><ellipse cx="151.6" cy="78.6" rx="2.2" ry="1.7" fill="#55484a" transform="rotate(131 151.6 78.6)"/><ellipse cx="117.6" cy="21.5" rx="2.4" ry="1.4" fill="#332a2a" transform="rotate(75 117.6 21.5)"/><ellipse cx="66.7" cy="68.5" rx="2.4" ry="2.3" fill="#6a5c60" transform="rotate(66 66.7 68.5)"/><ellipse cx="120.7" cy="36.4" rx="2.1" ry="1.1" fill="#2a2222" transform="rotate(177 120.7 36.4)"/><ellipse cx="128.5" cy="24.7" rx="2.9" ry="2.4" fill="#55484a" transform="rotate(55 128.5 24.7)"/><ellipse cx="58.5" cy="46.6" rx="2.3" ry="1.4" fill="#332a2a" transform="rotate(74 58.5 46.6)"/><ellipse cx="118.4" cy="22.9" rx="2.1" ry="2.1" fill="#6a5c60" transform="rotate(51 118.4 22.9)"/><ellipse cx="64.9" cy="65.5" rx="2.5" ry="1.7" fill="#2a2222" transform="rotate(35 64.9 65.5)"/><ellipse cx="105.3" cy="65.4" rx="1.7" ry="1.0" fill="#55484a" transform="rotate(71 105.3 65.4)"/><ellipse cx="65.3" cy="71.5" rx="3.1" ry="2.7" fill="#332a2a" transform="rotate(115 65.3 71.5)"/><ellipse cx="59.5" cy="59.5" rx="2.7" ry="2.0" fill="#6a5c60" transform="rotate(140 59.5 59.5)"/><ellipse cx="94.2" cy="46.9" rx="2.0" ry="1.5" fill="#2a2222" transform="rotate(144 94.2 46.9)"/><ellipse cx="106.8" cy="78.0" rx="3.1" ry="2.8" fill="#55484a" transform="rotate(145 106.8 78.0)"/><ellipse cx="87.9" cy="32.8" rx="1.9" ry="1.4" fill="#332a2a" transform="rotate(88 87.9 32.8)"/><ellipse cx="127.8" cy="75.8" rx="2.9" ry="1.6" fill="#6a5c60" transform="rotate(105 127.8 75.8)"/><ellipse cx="94.1" cy="80.7" rx="2.2" ry="1.2" fill="#2a2222" transform="rotate(26 94.1 80.7)"/><ellipse cx="65.9" cy="74.3" rx="2.6" ry="1.5" fill="#55484a" transform="rotate(178 65.9 74.3)"/><ellipse cx="87.8" cy="32.8" rx="2.7" ry="1.9" fill="#332a2a" transform="rotate(121 87.8 32.8)"/><ellipse cx="111.6" cy="25.3" rx="3.1" ry="2.7" fill="#6a5c60" transform="rotate(97 111.6 25.3)"/><ellipse cx="66.9" cy="50.6" rx="1.9" ry="1.8" fill="#2a2222" transform="rotate(129 66.9 50.6)"/><ellipse cx="105.0" cy="62.3" rx="3.2" ry="2.8" fill="#55484a" transform="rotate(73 105.0 62.3)"/><ellipse cx="116.8" cy="27.4" rx="1.5" ry="1.2" fill="#332a2a" transform="rotate(79 116.8 27.4)"/><ellipse cx="149.0" cy="29.6" rx="2.3" ry="1.6" fill="#6a5c60" transform="rotate(92 149.0 29.6)"/><ellipse cx="131.1" cy="76.9" rx="2.3" ry="2.3" fill="#2a2222" transform="rotate(127 131.1 76.9)"/><ellipse cx="91.4" cy="65.0" rx="2.8" ry="2.6" fill="#55484a" transform="rotate(119 91.4 65.0)"/><ellipse cx="80.4" cy="57.2" rx="2.6" ry="2.6" fill="#332a2a" transform="rotate(72 80.4 57.2)"/><ellipse cx="123.2" cy="19.1" rx="2.7" ry="2.6" fill="#6a5c60" transform="rotate(84 123.2 19.1)"/><ellipse cx="124.8" cy="69.4" rx="3.1" ry="2.7" fill="#2a2222" transform="rotate(3 124.8 69.4)"/><ellipse cx="120.2" cy="74.9" rx="1.7" ry="1.5" fill="#55484a" transform="rotate(159 120.2 74.9)"/><ellipse cx="137.0" cy="30.8" rx="2.5" ry="1.5" fill="#332a2a" transform="rotate(134 137.0 30.8)"/><ellipse cx="140.9" cy="27.0" rx="2.2" ry="1.4" fill="#6a5c60" transform="rotate(110 140.9 27.0)"/><ellipse cx="116.0" cy="47.5" rx="3.1" ry="1.7" fill="#2a2222" transform="rotate(37 116.0 47.5)"/><ellipse cx="57.2" cy="48.7" rx="2.6" ry="2.3" fill="#55484a" transform="rotate(151 57.2 48.7)"/></g><ellipse cx="118.5" cy="50.0" rx="22.3" ry="13.7" fill="#b18878" filter="url(#mk)"/><ellipse cx="80.9" cy="53.4" rx="13.7" ry="10.3" fill="#8e6252" filter="url(#mk)"/><ellipse cx="125.4" cy="118.5" rx="15.4" ry="22.3" fill="#996c5c" filter="url(#mk)"/><ellipse cx="67.2" cy="122.0" rx="10.3" ry="29.1" fill="#5b392d" filter="url(#mk)"/><ellipse cx="139.1" cy="156.2" rx="13.7" ry="13.7" fill="#5a3a30" filter="url(#mk)"/><ellipse cx="94.6" cy="161.4" rx="22.3" ry="8.6" fill="#5f3d31" filter="url(#mk)"/><ellipse cx="87.7" cy="111.7" rx="12.0" ry="8.6" fill="#6a4234" filter="url(#mk)"/><ellipse cx="163.1" cy="104.8" rx="7.2" ry="18.8" fill="#8a5c4c" transform="rotate(8 163.1 104.8)" /><ellipse cx="163.1" cy="104.8" rx="3.1" ry="10.3" fill="#5e3a2e" transform="rotate(8 163.1 104.8)" /><path d="M44.0 75.7C46.9 72.6 58.4 73.6 65.4 74.0C72.4 74.4 82.9 74.9 86.0 78.3C89.1 81.7 86.3 90.4 84.3 94.6C82.3 98.7 78.6 102.0 74.0 103.1C69.4 104.3 61.2 103.1 56.9 101.4C52.6 99.7 50.4 97.1 48.3 92.8C46.2 88.6 41.2 78.9 44.0 75.7Z" fill="#3a2a24" fill-opacity=".35" stroke="#5c3820" stroke-width="5.2"/><path d="M96.3 74.0C99.7 70.9 112.0 70.4 118.5 70.6C125.1 70.7 133.1 71.4 135.7 74.9C138.2 78.3 136.0 86.9 134.0 91.1C132.0 95.4 128.0 99.1 123.7 100.6C119.4 102.0 112.5 101.6 108.3 99.7C104.0 97.8 100.0 93.7 98.0 89.4C96.0 85.1 92.8 77.1 96.3 74.0Z" fill="#3a2a24" fill-opacity=".3" stroke="#5c3820" stroke-width="5.2"/><path d="M86.0 79.1C86.9 78.7 89.4 76.7 91.1 76.6C92.8 76.4 95.4 78.0 96.3 78.3" fill="none" stroke="#5c3820" stroke-width="4.4" stroke-linecap="round" /><path d="M135.7 75.7C138.0 76.6 145.7 79.1 149.4 80.9C153.1 82.6 156.5 85.1 157.9 86.0" fill="none" stroke="#4e3020" stroke-width="4.6" stroke-linecap="round" /><ellipse cx="68.9" cy="89.4" rx="7.7" ry="3.1" fill="#1e1614" /><ellipse cx="115.1" cy="86.0" rx="7.7" ry="3.1" fill="#1e1614" /><ellipse cx="53.4" cy="83.4" rx="3.1" ry="5.1" fill="#8098a8" filter="url(#mk)"/><ellipse cx="86.0" cy="116.8" rx="12.0" ry="4.5" fill="#4e3026" filter="url(#mk)"/><path d="M68.9 136.5C69.7 135.0 76.0 133.3 80.9 132.6C85.7 131.9 92.6 131.9 98.0 132.2C103.4 132.6 112.3 133.0 113.4 134.8C114.5 136.7 109.1 141.7 104.8 143.4C100.6 145.1 92.6 145.4 87.7 145.1C82.9 144.8 78.9 143.1 75.7 141.7C72.6 140.2 68.0 138.0 68.9 136.5Z" fill="#b97c7a" /><path d="M68.0 136.0C71.3 136.2 80.0 137.7 87.7 137.4C95.4 137.1 109.8 134.8 114.3 134.3" fill="none" stroke="#6d3c3a" stroke-width="1.6" stroke-linecap="round" /><ellipse cx="91.1" cy="141.2" rx="10.3" ry="2.4" fill="#cf9694" filter="url(#mk)"/></g></g></svg></div>
<svg class="bdg" width="56" height="56" viewBox="-28 -28 56 56" style="left:1400.2px;top:1026.0px"><circle r="25.8" fill="#5a5c5c"/><circle r="21.1" fill="#6bb700"/><path d="M-7.9 -0.2L-2.2 5.6L7.6 -4.9" fill="none" stroke="#5a5c5c" stroke-width="3.9"/></svg>
<div class="x" style="left:1255.91px;top:1108.49px;font-size:26.4px;color:#fff;-webkit-text-stroke:0.4px #fff;letter-spacing:0.300px;transform:scaleX(1.0585);">Colin Ballinger</div>
<div class="av" style="left:1581px;top:875px;background:#f2d7d1"></div>
<div class="x" style="left:1623.57px;top:935.70px;font-size:85.8px;color:#6c2115;transform:scaleX(1.0073);">MA</div>
<svg class="bdg" width="56" height="56" viewBox="-28 -28 56 56" style="left:1735.2px;top:1026.0px"><circle r="25.8" fill="#5a5c5c"/><circle r="21.1" fill="#d74553"/></svg>
<div class="x" style="left:1578.05px;top:1108.49px;font-size:26.4px;color:#fff;-webkit-text-stroke:0.4px #fff;letter-spacing:0.300px;transform:scaleX(1.0953);">Mauricio August</div>

<div class="x" style="left:2013.83px;top:361.79px;font-size:26.4px;color:#fff;-webkit-text-stroke:0.4px #fff;letter-spacing:0.300px;transform:scaleX(1.0574);">Maintenance on 2B</div>
<div class="x" style="left:2014.35px;top:397.30px;font-size:28.5px;color:#a0a0a0;transform:scaleX(0.9395);">0253</div>
<div class="x" style="left:2013.82px;top:536.29px;font-size:26.4px;color:#fff;-webkit-text-stroke:0.4px #fff;letter-spacing:0.300px;transform:scaleX(1.0410);">Scheduled</div>
<div class="x" style="left:1944.05px;top:657.79px;font-size:26.0px;color:#fff;-webkit-text-stroke:0.62px #fff;letter-spacing:0.300px;transform:scaleX(1.1003);">Support contact</div>
<div class="x" style="left:1943.84px;top:694.00px;font-size:27.3px;color:#fff;letter-spacing:0.150px;transform:scaleX(0.9842);">Carole Poland</div>
<div class="x" style="left:1943.72px;top:820.20px;font-size:27.3px;color:#fff;letter-spacing:0.150px;transform:scaleX(1.0191);">Start time</div>
<div class="x" style="left:1944.51px;top:855.99px;font-size:28.6px;color:#fff;-webkit-text-stroke:0.36px #fff;transform:scaleX(0.9608);">3:00</div><div class="x" style="left:2005.89px;top:864.60px;font-size:19.8px;color:#fff;-webkit-text-stroke:0.15px #fff;font-weight:700;transform:scaleX(1.2018);">PM</div><div class="x" style="left:2129.76px;top:856.30px;font-size:29.0px;color:#fff;transform:scaleX(0.9608);">10/07/2018</div>
<div class="x" style="left:1943.67px;top:922.50px;font-size:27.3px;color:#fff;letter-spacing:0.150px;transform:scaleX(1.0090);">End time</div>
<div class="x" style="left:1944.51px;top:957.89px;font-size:28.6px;color:#fff;-webkit-text-stroke:0.36px #fff;transform:scaleX(0.9608);">3:00</div><div class="x" style="left:2005.89px;top:966.50px;font-size:19.8px;color:#fff;-webkit-text-stroke:0.15px #fff;font-weight:700;transform:scaleX(1.2018);">PM</div><div class="x" style="left:2129.76px;top:958.20px;font-size:29.0px;color:#fff;transform:scaleX(0.9608);">10/07/2018</div>
<div class="x" style="left:1916.27px;top:1071.30px;font-size:27.3px;color:#fff;letter-spacing:0.150px;transform:scaleX(0.9760);">Power BI link</div>
<div class="x" style="left:1916.98px;top:1105.50px;font-size:27.3px;color:#1091e6;-webkit-text-stroke:0.15px #1091e6;letter-spacing:0.150px;transform:scaleX(1.0304);">powerbi.microsoft.com/114B3...</div>
<div id="clip" class="abs"><div class="x" id="logs" style="left:1916.59px;top:1210.00px;font-size:27.3px;color:#fff;letter-spacing:0.150px;transform:scaleX(1.0387);">Call activity logs</div></div>

<svg id="icons" width="2560" height="1401" viewBox="0 0 2560 1401" style="left:0;top:0" fill="none" stroke="#fff" stroke-width="2.4" stroke-linecap="butt" stroke-linejoin="miter">
  <!-- toolbar: minimise to dot -->
  <g>
    <circle cx="556.6" cy="248" r="7.1"/>
    <path d="M584.6 219.6L568.4 235.9"/>
    <path d="M568.2 220.9V236.3H583.4"/>
  </g>
  <!-- toolbar: pen -->
  <g stroke-width="2.2" stroke-linecap="round" stroke-linejoin="round">
    <g transform="translate(732.8 255.2) rotate(27.8)">
      <path d="M0 0.4L-3 -5C-3.2 -6 -3.2 -6.5 -3.2 -7.5V-33A3.2 3.2 0 0 1 3.2 -33V-7.5C3.2 -6.5 3.2 -6 3 -5Z"/>
      <path d="M-1.7 -36V-37.8A1.7 1.7 0 0 1 1.7 -37.8V-36"/>
      <path d="M-7 -21.5V-31.6A2.3 2.3 0 0 1 -3.2 -32.8"/>
    </g>
    <path d="M742.2 255.2C745.5 252 748 249.9 750.6 250.1C754.2 250.4 756.2 254.6 760.2 254.8C763 254.9 765 254 766.4 252.4"/>
  </g>
  <!-- toolbar: colour swatch -->
  <rect x="913.8" y="221" width="32.4" height="32.8" rx="7" ry="7" fill="#d0696f" stroke-width="2.4"/>
  <!-- toolbar: undo -->
  <g>
    <path d="M1102.1 229.2A11.1 11.1 0 1 1 1120.85 239.15L1105.6 254.6"/>
    <path d="M1098.8 218.9V229.6H1109.3"/>
  </g>
  <!-- toolbar: trash -->
  <g stroke-linejoin="round">
    <path d="M1276.8 224.8H1307.2" stroke-linecap="round"/>
    <path d="M1287.8 224.8V222.2A2 2 0 0 1 1289.8 220.2H1294.6A2 2 0 0 1 1296.6 222.2V224.8"/>
    <path d="M1280.3 224.8V252A2.9 2.9 0 0 0 1283.2 254.9H1301A2.9 2.9 0 0 0 1303.9 252V224.8"/>
    <path d="M1287.1 230.7V249M1292 230.7V249M1296.9 230.7V249"/>
  </g>
  <!-- toolbar: active locate button -->
  <circle cx="1474.6" cy="237.4" r="46.5" fill="#1a79c4" stroke="none"/>
  <g stroke-width="2.1" stroke-linejoin="round" stroke-linecap="round">
    <path d="M1466.4 248.4L1464.3 250.3L1456.7 237.4L1465.5 222.1H1484.1L1492.9 237.4L1485.3 250.3L1483.2 248.4"/>
    <path d="M1474.5 255.2L1466.1 243.4A10.3 10.3 0 1 1 1482.9 243.4Z"/>
    <circle cx="1474.5" cy="237.5" r="5.5"/>
  </g>
  <!-- toolbar: move -->
  <g stroke-width="2.5">
    <path d="M1654.8 219.9V230.8M1648.8 226.3L1654.8 219.9L1660.8 226.3"/>
    <path d="M1654.8 253.2V242.1M1648.8 246.8L1654.8 253.2L1660.8 246.8"/>
    <path d="M1638.2 236.4H1649.1M1644.6 230.4L1638.2 236.4L1644.6 242.4"/>
    <path d="M1671.6 236.4H1660.9M1665.2 230.4L1671.6 236.4L1665.2 242.4"/>
  </g>
  <!-- toolbar: pin -->
  <g stroke-width="2.2" stroke-linejoin="round">
    <path d="M1819.6 236.5H1833.6" stroke-width="1.9" stroke-linecap="round"/>
    <path d="M1833.9 226.3V246.6M1833.9 226.5C1837.6 226.8 1839.6 229 1840.8 231.3H1850.8L1855.3 228.2V244.8L1850.8 241.5H1840.8C1839.6 243.9 1837.6 246.1 1833.9 246.4"/>
  </g>

  <!-- sidebar: signal -->
  <g stroke-width="3.4">
    <path d="M285.8 405A28.9 28.9 0 0 1 319.4 372.2" stroke="#686868"/>
    <path d="M294.3 405A20.4 20.4 0 0 1 319.4 380.8"/>
    <path d="M302.9 405A11.8 11.8 0 0 1 319.4 389.8"/>
    <circle cx="314.7" cy="400.6" r="4.7" fill="#fff" stroke="none"/>
  </g>
  <!-- sidebar: phone -->
  <path stroke-width="3" stroke-linejoin="round" d="M175.6 588.3C178 587.6 180.2 590.2 182.6 592.9C185 595.6 185.6 597.3 183.8 599.3C181.6 601.7 178.8 602.5 180.3 605.3C183.4 610.9 188.6 616.4 194.2 619.6C196.9 621.1 198 618.4 200.3 616.4C202.3 614.7 204 615.3 206.6 617.6C209.2 619.9 211.8 622.2 211.2 624.6C210.3 628 205.6 631.3 200.4 631.3C190.6 631.2 181.2 624.2 175.3 616.3C170.6 610 167.9 603.4 168 598.6C168.1 593.4 171.8 589.4 175.6 588.3Z"/>
  <!-- sidebar: assets -->
  <g stroke-width="3" stroke-linejoin="miter">
    <path d="M203.9 744.5V735.6L185.7 727.3L167.9 735.6V758.2L184.3 766.6V745.1L203.2 735.9M167.9 735.6L184.3 745.1"/>
    <path d="M176.4 731.6L193.7 740.6M181.6 729.2L198.7 738.2" stroke-width="2.6"/>
    <path d="M190.9 769.3L203.6 756.6" stroke-width="7.6" stroke-linecap="round"/>
    <circle cx="207.1" cy="753.3" r="5.9" fill="#fff" stroke="none"/>
    <path d="M190.9 769.3L203.4 756.8" stroke="#222" stroke-width="2" stroke-linecap="round"/>
    <circle cx="207.1" cy="753.3" r="3" fill="#222" stroke="none"/>
    <path d="M207.6 752.8L211.6 748.8" stroke="#222" stroke-width="2.4"/>
  </g>
  <!-- sidebar: files -->
  <g stroke-width="3" stroke-linejoin="miter">
    <path d="M183.9 905.6H167.9V870.3H181.6C184.2 870.3 185.2 873.5 187.4 873.5H211.7V881.5"/>
    <path d="M167.9 875.2H180.6C183.2 875.2 184.6 873.6 186.2 872.6" stroke-width="2.6"/>
    <path d="M203.4 881.6H188.6V911H211.6V889.8L203.4 881.6V889.8H211.6"/>
  </g>
  <!-- sidebar: settings -->
  <g stroke-width="3" stroke-linejoin="miter">
    <path d="M192.4 1133.4L194.9 1128.2L201.3 1130.8L199.4 1136.3L203.1 1140.0L208.6 1138.1L211.2 1144.5L206.0 1147.0L206.0 1152.2L211.2 1154.7L208.6 1161.1L203.1 1159.2L199.4 1162.9L201.3 1168.4L194.9 1171.0L192.4 1165.8L187.2 1165.8L184.7 1171.0L178.3 1168.4L180.2 1162.9L176.5 1159.2L171.0 1161.1L168.4 1154.7L173.6 1152.2L173.6 1147.0L168.4 1144.5L171.0 1138.1L176.5 1140.0L180.2 1136.3L178.3 1130.8L184.7 1128.2L187.2 1133.4Z"/>
    <circle cx="189.8" cy="1149.6" r="7.3"/>
  </g>

  <!-- search tile -->
  <g stroke-width="7" stroke-linecap="round">
    <circle cx="697.7" cy="567.5" r="38.1"/>
    <path d="M670.4 594.6L622 641.4"/>
  </g>

  <!-- right: back -->
  <path d="M1984.2 390.9H1944.2M1963.2 372.3L1944 390.9L1963.2 409.7" stroke-width="2.5"/>
  <!-- right: clock -->
  <g stroke-width="2.2">
    <circle cx="1963.3" cy="549.1" r="15.4"/>
    <path d="M1961.4 540.9V551.3H1969.8"/>
  </g>
  <!-- right: chevron -->
  <path d="M2360.2 540.2L2377.6 557.4L2395.1 540.2" stroke="#b2b4b4" stroke-width="2"/>
  <!-- right: external link -->
  <g stroke="#1091e6" stroke-width="2.3">
    <path d="M2334 1107.2H2322.6V1129.6H2346V1117.6"/>
    <path d="M2330.4 1122.8L2345.6 1107.6M2337.2 1107.2H2346V1116"/>
  </g>
</svg>

</body>
</html>
